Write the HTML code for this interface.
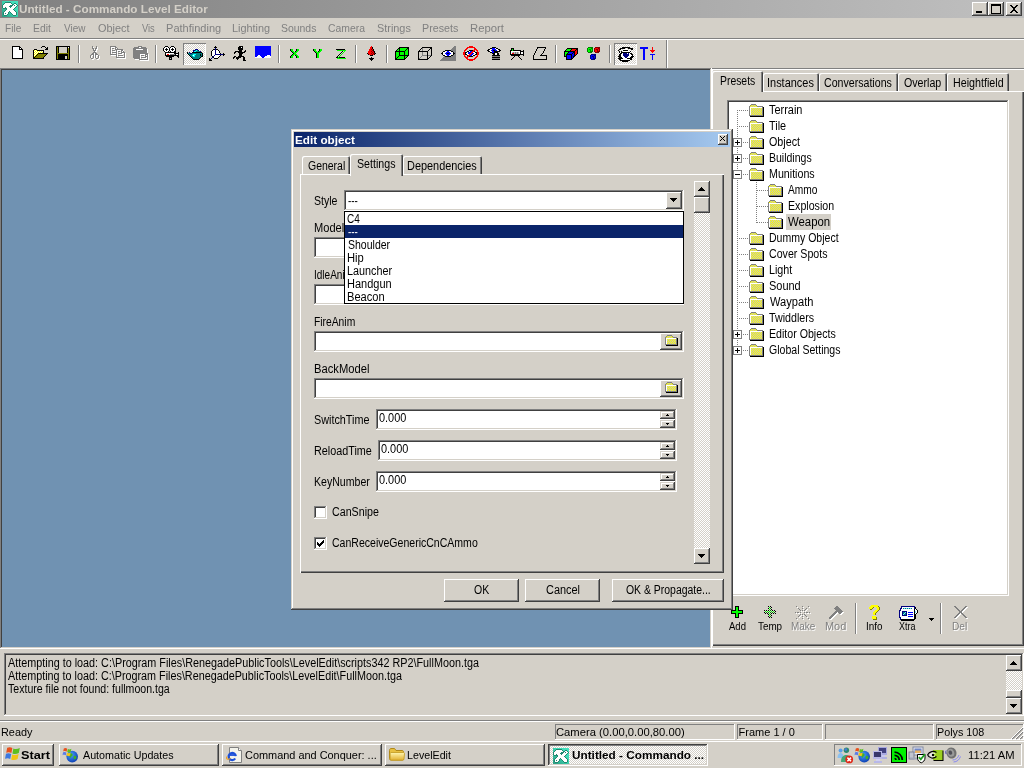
<!DOCTYPE html>
<html>
<head>
<meta charset="utf-8">
<title>Untitled - Commando Level Editor</title>
<style>
*{box-sizing:border-box;margin:0;padding:0}
html,body{width:1024px;height:768px;overflow:hidden;background:#d4d0c8;font-family:"Liberation Sans",sans-serif;font-size:12px;color:#000}
.a{position:absolute}
.t{position:absolute;white-space:nowrap;line-height:16px;height:16px;transform-origin:0 0}
.raised{box-shadow:inset -1px -1px 0 #404040,inset 1px 1px 0 #fff,inset -2px -2px 0 #808080,inset 2px 2px 0 #d4d0c8;background:#d4d0c8}
.btn{box-shadow:inset -1px -1px 0 #404040,inset 1px 1px 0 #fff,inset -2px -2px 0 #808080;background:#d4d0c8}
.sunken{box-shadow:inset -1px -1px 0 #fff,inset 1px 1px 0 #808080,inset -2px -2px 0 #d4d0c8,inset 2px 2px 0 #404040}
.pressed{box-shadow:inset -1px -1px 0 #fff,inset 1px 1px 0 #404040,inset -2px -2px 0 #d4d0c8,inset 2px 2px 0 #808080}
.frame{box-shadow:inset -1px -1px 0 #404040,inset 1px 1px 0 #d4d0c8,inset -2px -2px 0 #808080,inset 2px 2px 0 #fff;background:#d4d0c8}
.tsunk{box-shadow:inset -1px -1px 0 #fff,inset 1px 1px 0 #808080}
.traise{box-shadow:inset -1px -1px 0 #808080,inset 1px 1px 0 #fff}
.chk{background-image:conic-gradient(#fff 25%,#d4d0c8 0 50%,#fff 0 75%,#d4d0c8 0);background-size:2px 2px}
.vsep{position:absolute;width:2px;border-left:1px solid #808080;border-right:1px solid #fff}
svg{position:absolute;overflow:visible}
</style>
</head>
<body>
<div id="w" style="position:absolute;left:0;top:0;width:1024px;height:768px;will-change:transform">
<div class="a " style="left:0px;top:0px;width:1024px;height:18px;background:linear-gradient(90deg,#808080,#c0c0c0)"></div>
<span class="t" style="left:19.33px;top:1px;font-size:11px;color:#d4d0c8;font-weight:bold;transform:scaleX(1.0652);">Untitled - Commando Level Editor</span>
<div class="a btn" style="left:972px;top:2px;width:16px;height:14px;"></div>
<div class="a btn" style="left:988px;top:2px;width:16px;height:14px;"></div>
<div class="a btn" style="left:1006px;top:2px;width:16px;height:14px;"></div>
<svg style="left:972px;top:2px" width="50" height="14" shape-rendering="crispEdges"><rect x="4" y="9" width="6" height="2" fill="#000"/><rect x="19" y="2" width="9" height="9" fill="none" stroke="#000" stroke-width="1" transform="translate(.5,.5)"/><rect x="19" y="2" width="10" height="2" fill="#000"/><path d="M38 3h2v1h1v1h1v1h0v-1h1v-1h1v-1h2v1h-1v1h-1v1h-1v1h-0v1h1v1h1v1h1v1h-2v-1h-1v-1h-1v-1h0v1h-1v1h-1v1h-2v-1h1v-1h1v-1h1v-1h0v-1h-1v-1h-1v-1h-1z" fill="#000"/></svg>
<span class="t" style="left:5.20px;top:20px;font-size:11px;color:#808080;transform:scaleX(0.9160);">File</span>
<span class="t" style="left:33.17px;top:20px;font-size:11px;color:#808080;transform:scaleX(0.9444);">Edit</span>
<span class="t" style="left:64.00px;top:20px;font-size:11px;color:#808080;transform:scaleX(0.9053);">View</span>
<span class="t" style="left:97.50px;top:20px;font-size:11px;color:#808080;transform:scaleX(0.9920);">Object</span>
<span class="t" style="left:141.50px;top:20px;font-size:11px;color:#808080;transform:scaleX(0.8475);">Vis</span>
<span class="t" style="left:166.12px;top:20px;font-size:11px;color:#808080;">Pathfinding</span>
<span class="t" style="left:231.63px;top:20px;font-size:11px;color:#808080;transform:scaleX(0.9898);">Lighting</span>
<span class="t" style="left:281.03px;top:20px;font-size:11px;color:#808080;transform:scaleX(0.9485);">Sounds</span>
<span class="t" style="left:328.03px;top:20px;font-size:11px;color:#808080;transform:scaleX(0.9450);">Camera</span>
<span class="t" style="left:377.01px;top:20px;font-size:11px;color:#808080;transform:scaleX(0.9888);">Strings</span>
<span class="t" style="left:422.15px;top:20px;font-size:11px;color:#808080;transform:scaleX(0.9722);">Presets</span>
<span class="t" style="left:469.60px;top:20px;font-size:11px;color:#808080;transform:scaleX(1.0272);">Report</span>
<div class="a " style="left:0px;top:38px;width:1024px;height:1px;background:#808080"></div>
<div class="a " style="left:0px;top:39px;width:1024px;height:1px;background:#fff"></div>
<div class="a sunken" style="left:0px;top:68px;width:712px;height:581px;background:#7092b2"></div>
<div class="vsep" style="left:78px;top:45px;height:18px"></div>
<div class="vsep" style="left:155px;top:45px;height:18px"></div>
<div class="vsep" style="left:278px;top:45px;height:18px"></div>
<div class="vsep" style="left:355px;top:45px;height:18px"></div>
<div class="vsep" style="left:386px;top:45px;height:18px"></div>
<div class="vsep" style="left:555px;top:45px;height:18px"></div>
<div class="vsep" style="left:609px;top:45px;height:18px"></div>
<div class="vsep" style="left:666px;top:40px;height:28px"></div>
<div class="a chk" style="left:183px;top:43px;width:23px;height:22px;box-shadow:inset 1px 1px 0 #808080,inset -1px -1px 0 #fff"></div>
<div class="a chk" style="left:614px;top:43px;width:23px;height:22px;box-shadow:inset 1px 1px 0 #808080,inset -1px -1px 0 #fff"></div>
<svg style="left:12px;top:46px" width="12" height="14" shape-rendering="crispEdges"><path fill="#000" d="M0 0h8v1h-8zM0 1h1v1h-1zM7 1h2v1h-2zM0 2h1v1h-1zM7 2h1v1h-1zM9 2h1v1h-1zM0 3h1v1h-1zM7 3h4v1h-4zM0 4h1v1h-1zM10 4h1v1h-1zM0 5h1v1h-1zM10 5h1v1h-1zM0 6h1v1h-1zM10 6h1v1h-1zM0 7h1v1h-1zM10 7h1v1h-1zM0 8h1v1h-1zM10 8h1v1h-1zM0 9h1v1h-1zM10 9h1v1h-1zM0 10h1v1h-1zM10 10h1v1h-1zM0 11h1v1h-1zM10 11h1v1h-1zM0 12h11v1h-11z"/><path fill="#fff" d="M1 1h6v1h-6zM1 2h6v1h-6zM8 2h1v1h-1zM1 3h6v1h-6zM1 4h9v1h-9zM1 5h9v1h-9zM1 6h9v1h-9zM1 7h9v1h-9zM1 8h9v1h-9zM1 9h9v1h-9zM1 10h9v1h-9zM1 11h9v1h-9z"/></svg>
<svg style="left:33px;top:46px" width="17" height="14" shape-rendering="crispEdges"><path fill="#000" d="M9 0h3v1h-3zM8 1h1v1h-1zM12 1h1v1h-1zM14 1h1v1h-1zM13 2h2v1h-2zM1 3h3v1h-3zM12 3h3v1h-3zM0 4h1v1h-1zM4 4h7v1h-7zM0 5h1v1h-1zM10 5h1v1h-1zM0 6h1v1h-1zM10 6h1v1h-1zM0 7h1v1h-1zM5 7h10v1h-10zM0 8h1v1h-1zM4 8h1v1h-1zM13 8h1v1h-1zM0 9h1v1h-1zM3 9h1v1h-1zM12 9h1v1h-1zM0 10h1v1h-1zM2 10h1v1h-1zM11 10h1v1h-1zM0 11h2v1h-2zM10 11h1v1h-1zM0 12h11v1h-11z"/><path fill="#ffff00" d="M1 4h1v1h-1zM3 4h1v1h-1zM2 5h1v1h-1zM4 5h1v1h-1zM6 5h1v1h-1zM8 5h1v1h-1zM1 6h1v1h-1zM3 6h1v1h-1zM5 6h1v1h-1zM7 6h1v1h-1zM9 6h1v1h-1zM2 7h1v1h-1zM4 7h1v1h-1zM1 8h1v1h-1zM3 8h1v1h-1zM2 9h1v1h-1zM1 10h1v1h-1z"/><path fill="#fff" d="M2 4h1v1h-1zM1 5h1v1h-1zM3 5h1v1h-1zM5 5h1v1h-1zM7 5h1v1h-1zM9 5h1v1h-1zM2 6h1v1h-1zM4 6h1v1h-1zM6 6h1v1h-1zM8 6h1v1h-1zM1 7h1v1h-1zM3 7h1v1h-1zM2 8h1v1h-1zM1 9h1v1h-1z"/><path fill="#808000" d="M5 8h8v1h-8zM4 9h8v1h-8zM3 10h8v1h-8zM2 11h8v1h-8z"/></svg>
<svg style="left:56px;top:46px" width="15" height="15" shape-rendering="crispEdges"><path fill="#000" d="M0 0h14v1h-14zM0 1h1v1h-1zM2 1h1v1h-1zM11 1h1v1h-1zM13 1h1v1h-1zM0 2h1v1h-1zM2 2h1v1h-1zM11 2h1v1h-1zM13 2h1v1h-1zM0 3h1v1h-1zM2 3h1v1h-1zM11 3h1v1h-1zM13 3h1v1h-1zM0 4h1v1h-1zM2 4h1v1h-1zM11 4h1v1h-1zM13 4h1v1h-1zM0 5h1v1h-1zM2 5h1v1h-1zM11 5h1v1h-1zM13 5h1v1h-1zM0 6h1v1h-1zM2 6h1v1h-1zM11 6h1v1h-1zM13 6h1v1h-1zM0 7h1v1h-1zM13 7h1v1h-1zM0 8h1v1h-1zM2 8h10v1h-10zM13 8h1v1h-1zM0 9h1v1h-1zM2 9h10v1h-10zM13 9h1v1h-1zM0 10h1v1h-1zM2 10h7v1h-7zM11 10h1v1h-1zM13 10h1v1h-1zM0 11h1v1h-1zM2 11h7v1h-7zM11 11h1v1h-1zM13 11h1v1h-1zM0 12h1v1h-1zM2 12h7v1h-7zM11 12h1v1h-1zM13 12h1v1h-1zM0 13h14v1h-14z"/><path fill="#808000" d="M1 1h1v1h-1zM1 2h1v1h-1zM12 2h1v1h-1zM1 3h1v1h-1zM12 3h1v1h-1zM1 4h1v1h-1zM12 4h1v1h-1zM1 5h1v1h-1zM12 5h1v1h-1zM1 6h1v1h-1zM12 6h1v1h-1zM1 7h12v1h-12zM1 8h1v1h-1zM12 8h1v1h-1zM1 9h1v1h-1zM12 9h1v1h-1zM1 10h1v1h-1zM12 10h1v1h-1zM1 11h1v1h-1zM12 11h1v1h-1zM1 12h1v1h-1zM12 12h1v1h-1z"/><path fill="#d4d0c8" d="M3 1h8v1h-8zM3 2h8v1h-8zM3 3h8v1h-8zM3 4h8v1h-8zM3 5h8v1h-8zM3 6h8v1h-8zM9 10h2v1h-2zM9 11h2v1h-2zM9 12h2v1h-2z"/><path fill="#fff" d="M12 1h1v1h-1z"/></svg>
<svg style="left:90px;top:46px" width="10" height="14" shape-rendering="crispEdges"><path fill="#fff" transform="translate(1,1)" d="M2 0h1v1h-1zM6 0h1v1h-1zM2 1h1v1h-1zM6 1h1v1h-1zM2 2h2v1h-2zM5 2h2v1h-2zM3 3h1v1h-1zM5 3h1v1h-1zM3 4h3v1h-3zM4 5h1v1h-1zM3 6h3v1h-3zM2 7h2v1h-2zM5 7h2v1h-2zM1 8h3v1h-3zM5 8h3v1h-3zM0 9h1v1h-1zM3 9h1v1h-1zM5 9h1v1h-1zM8 9h1v1h-1zM0 10h1v1h-1zM3 10h1v1h-1zM5 10h1v1h-1zM8 10h1v1h-1zM0 11h1v1h-1zM3 11h1v1h-1zM5 11h1v1h-1zM8 11h1v1h-1zM1 12h2v1h-2zM6 12h2v1h-2z"/><path fill="#808080" d="M2 0h1v1h-1zM6 0h1v1h-1zM2 1h1v1h-1zM6 1h1v1h-1zM2 2h2v1h-2zM5 2h2v1h-2zM3 3h1v1h-1zM5 3h1v1h-1zM3 4h3v1h-3zM4 5h1v1h-1zM3 6h3v1h-3zM2 7h2v1h-2zM5 7h2v1h-2zM1 8h3v1h-3zM5 8h3v1h-3zM0 9h1v1h-1zM3 9h1v1h-1zM5 9h1v1h-1zM8 9h1v1h-1zM0 10h1v1h-1zM3 10h1v1h-1zM5 10h1v1h-1zM8 10h1v1h-1zM0 11h1v1h-1zM3 11h1v1h-1zM5 11h1v1h-1zM8 11h1v1h-1zM1 12h2v1h-2zM6 12h2v1h-2z"/></svg>
<svg style="left:110px;top:46px" width="17" height="13" shape-rendering="crispEdges"><path fill="#fff" transform="translate(1,1)" d="M0 0h6v1h-6zM0 1h1v1h-1zM5 1h2v1h-2zM0 2h1v1h-1zM2 2h2v1h-2zM5 2h1v1h-1zM7 2h1v1h-1zM0 3h1v1h-1zM5 3h8v1h-8zM0 4h1v1h-1zM2 4h3v1h-3zM6 4h1v1h-1zM11 4h2v1h-2zM0 5h1v1h-1zM6 5h1v1h-1zM8 5h2v1h-2zM11 5h1v1h-1zM13 5h1v1h-1zM0 6h1v1h-1zM2 6h5v1h-5zM11 6h4v1h-4zM0 7h1v1h-1zM6 7h1v1h-1zM8 7h4v1h-4zM14 7h1v1h-1zM0 8h7v1h-7zM14 8h1v1h-1zM6 9h1v1h-1zM8 9h5v1h-5zM14 9h1v1h-1zM6 10h1v1h-1zM14 10h1v1h-1zM6 11h9v1h-9z"/><path fill="#808080" d="M0 0h6v1h-6zM0 1h1v1h-1zM5 1h2v1h-2zM0 2h1v1h-1zM2 2h2v1h-2zM5 2h1v1h-1zM7 2h1v1h-1zM0 3h1v1h-1zM5 3h8v1h-8zM0 4h1v1h-1zM2 4h3v1h-3zM6 4h1v1h-1zM11 4h2v1h-2zM0 5h1v1h-1zM6 5h1v1h-1zM8 5h2v1h-2zM11 5h1v1h-1zM13 5h1v1h-1zM0 6h1v1h-1zM2 6h5v1h-5zM11 6h4v1h-4zM0 7h1v1h-1zM6 7h1v1h-1zM8 7h4v1h-4zM14 7h1v1h-1zM0 8h7v1h-7zM14 8h1v1h-1zM6 9h1v1h-1zM8 9h5v1h-5zM14 9h1v1h-1zM6 10h1v1h-1zM14 10h1v1h-1zM6 11h9v1h-9z"/></svg>
<svg style="left:133px;top:46px" width="17" height="15" shape-rendering="crispEdges"><path fill="#fff" transform="translate(1,1)" d="M5 0h4v1h-4zM1 1h5v1h-5zM8 1h5v1h-5zM0 2h14v1h-14zM0 3h3v1h-3zM10 3h4v1h-4zM0 4h14v1h-14zM0 5h14v1h-14zM0 6h14v1h-14zM0 7h15v1h-15zM0 8h7v1h-7zM12 8h3v1h-3zM0 9h7v1h-7zM8 9h3v1h-3zM12 9h1v1h-1zM14 9h1v1h-1zM0 10h7v1h-7zM12 10h3v1h-3zM0 11h7v1h-7zM8 11h5v1h-5zM14 11h1v1h-1zM1 12h6v1h-6zM14 12h1v1h-1zM6 13h9v1h-9z"/><path fill="#808080" d="M5 0h4v1h-4zM1 1h5v1h-5zM8 1h5v1h-5zM0 2h14v1h-14zM0 3h3v1h-3zM10 3h4v1h-4zM0 4h14v1h-14zM0 5h14v1h-14zM0 6h14v1h-14zM0 7h15v1h-15zM0 8h7v1h-7zM12 8h3v1h-3zM0 9h7v1h-7zM8 9h3v1h-3zM12 9h1v1h-1zM14 9h1v1h-1zM0 10h7v1h-7zM12 10h3v1h-3zM0 11h7v1h-7zM8 11h5v1h-5zM14 11h1v1h-1zM1 12h6v1h-6zM14 12h1v1h-1zM6 13h9v1h-9z"/></svg>
<svg style="left:163px;top:46px" width="18" height="15" shape-rendering="crispEdges"><path fill="#000" d="M2 0h3v1h-3zM8 0h3v1h-3zM1 1h1v1h-1zM5 1h1v1h-1zM7 1h1v1h-1zM11 1h1v1h-1zM0 2h1v1h-1zM3 2h1v1h-1zM6 2h1v1h-1zM9 2h1v1h-1zM12 2h1v1h-1zM0 3h1v1h-1zM2 3h3v1h-3zM6 3h1v1h-1zM8 3h3v1h-3zM12 3h1v1h-1zM0 4h1v1h-1zM3 4h1v1h-1zM6 4h1v1h-1zM9 4h1v1h-1zM12 4h1v1h-1zM1 5h1v1h-1zM5 5h1v1h-1zM7 5h1v1h-1zM11 5h2v1h-2zM2 6h11v1h-11zM15 6h1v1h-1zM2 7h1v1h-1zM11 7h5v1h-5zM2 8h1v1h-1zM12 8h1v1h-1zM15 8h1v1h-1zM2 9h14v1h-14zM3 10h8v1h-8zM14 10h2v1h-2zM6 11h3v1h-3zM15 11h1v1h-1zM6 12h1v1h-1zM8 12h1v1h-1zM6 13h3v1h-3z"/><path fill="#fff" d="M2 1h3v1h-3zM8 1h3v1h-3zM1 2h2v1h-2zM4 2h2v1h-2zM7 2h2v1h-2zM10 2h2v1h-2zM1 3h1v1h-1zM5 3h1v1h-1zM7 3h1v1h-1zM11 3h1v1h-1zM1 4h2v1h-2zM4 4h2v1h-2zM7 4h2v1h-2zM10 4h2v1h-2zM2 5h3v1h-3zM8 5h3v1h-3zM3 7h8v1h-8zM3 8h1v1h-1zM6 8h1v1h-1zM13 8h2v1h-2z"/><path fill="#ff0000" d="M4 8h2v1h-2z"/><path fill="#808080" d="M7 8h5v1h-5z"/><path fill="#c0c0c0" d="M7 12h1v1h-1z"/></svg>
<svg style="left:187px;top:49px" width="17" height="12" shape-rendering="crispEdges"><path fill="#000080" d="M8 0h3v1h-3zM6 1h2v1h-2zM11 1h1v1h-1zM6 2h1v1h-1zM13 2h1v1h-1zM2 3h1v1h-1zM3 4h2v1h-2z"/><path fill="#008080" d="M8 1h1v1h-1zM10 1h1v1h-1zM9 2h4v1h-4zM1 4h2v1h-2zM5 4h10v1h-10zM2 5h4v1h-4zM9 5h4v1h-4zM14 5h1v1h-1zM3 6h2v1h-2zM8 6h5v1h-5zM14 6h1v1h-1zM4 7h2v1h-2zM8 7h6v1h-6zM5 8h8v1h-8zM6 9h6v1h-6z"/><path fill="#00ffff" d="M9 1h1v1h-1zM7 2h2v1h-2zM6 5h3v1h-3zM5 6h1v1h-1zM7 6h1v1h-1zM6 7h2v1h-2z"/><path fill="#000" d="M0 3h1v1h-1zM5 3h10v1h-10zM0 4h1v1h-1zM15 4h1v1h-1zM1 5h1v1h-1zM13 5h1v1h-1zM15 5h1v1h-1zM2 6h1v1h-1zM13 6h1v1h-1zM15 6h1v1h-1zM3 7h1v1h-1zM14 7h2v1h-2zM4 8h1v1h-1zM13 8h1v1h-1zM5 9h1v1h-1zM12 9h1v1h-1zM6 10h6v1h-6z"/><path fill="#fff" d="M6 6h1v1h-1z"/></svg>
<svg style="left:209px;top:46px" width="17" height="16" shape-rendering="crispEdges"><path fill="#000" d="M6 0h1v1h-1zM5 1h3v1h-3zM4 3h2v1h-2zM7 3h2v1h-2zM3 4h1v1h-1zM9 4h1v1h-1zM2 5h1v1h-1zM10 5h1v1h-1zM2 6h1v1h-1zM10 6h1v1h-1zM2 7h1v1h-1zM11 7h1v1h-1zM14 7h1v1h-1zM2 8h1v1h-1zM14 8h2v1h-2zM2 9h1v1h-1zM11 9h1v1h-1zM14 9h1v1h-1zM3 10h1v1h-1zM10 10h1v1h-1zM4 11h1v1h-1zM9 11h1v1h-1zM0 12h1v1h-1zM5 12h4v1h-4zM0 13h2v1h-2zM0 14h3v1h-3z"/><path fill="#000080" d="M6 2h1v1h-1zM6 3h1v1h-1zM6 4h1v1h-1zM6 5h1v1h-1zM6 6h1v1h-1zM6 7h1v1h-1zM6 8h8v1h-8zM5 9h1v1h-1zM4 10h1v1h-1zM3 11h1v1h-1zM2 12h1v1h-1z"/><path fill="#fff" d="M4 4h2v1h-2zM7 4h2v1h-2zM3 5h3v1h-3zM7 5h3v1h-3zM3 6h3v1h-3zM7 6h3v1h-3zM3 7h3v1h-3zM7 7h4v1h-4zM3 8h3v1h-3zM3 9h2v1h-2zM6 9h5v1h-5zM5 10h5v1h-5zM5 11h4v1h-4z"/></svg>
<svg style="left:233px;top:46px" width="14" height="16" shape-rendering="crispEdges"><path fill="#000" d="M6 0h4v1h-4zM5 1h3v1h-3zM9 1h1v1h-1zM5 2h5v1h-5zM5 3h5v1h-5zM6 4h3v1h-3zM12 4h1v1h-1zM2 5h7v1h-7zM11 5h2v1h-2zM1 6h2v1h-2zM5 6h7v1h-7zM1 7h1v1h-1zM6 7h4v1h-4zM6 8h3v1h-3zM6 9h3v1h-3zM1 10h2v1h-2zM5 10h6v1h-6zM0 11h2v1h-2zM3 11h5v1h-5zM10 11h2v1h-2zM0 12h1v1h-1zM3 12h3v1h-3zM10 12h2v1h-2zM4 13h1v1h-1zM10 13h2v1h-2zM10 14h3v1h-3z"/><path fill="#fff" d="M8 1h1v1h-1z"/></svg>
<svg style="left:255px;top:46px" width="17" height="13" shape-rendering="crispEdges"><path fill="#0000ff" d="M0 0h16v1h-16zM0 1h16v1h-16zM0 2h16v1h-16zM0 3h16v1h-16zM0 4h16v1h-16zM0 5h16v1h-16zM0 6h16v1h-16zM0 7h16v1h-16zM0 8h16v1h-16zM0 9h3v1h-3zM5 9h7v1h-7zM15 9h1v1h-1zM0 10h2v1h-2zM6 10h4v1h-4zM7 11h2v1h-2z"/><path fill="#fff" d="M3 9h2v1h-2zM12 9h3v1h-3zM2 10h4v1h-4zM10 10h6v1h-6zM0 11h7v1h-7zM9 11h7v1h-7z"/></svg>
<svg style="left:290px;top:49px" width="10" height="10" shape-rendering="crispEdges"><path fill="#000" d="M0 0h1v1h-1zM6 0h1v1h-1zM0 1h1v1h-1zM6 1h1v1h-1zM1 2h1v1h-1zM5 2h1v1h-1zM2 3h1v1h-1zM3 4h1v1h-1zM2 5h1v1h-1zM1 6h1v1h-1zM5 6h1v1h-1zM0 7h1v1h-1zM6 7h1v1h-1zM0 8h1v1h-1zM6 8h1v1h-1z"/><path fill="#00ff00" d="M1 0h2v1h-2zM7 0h2v1h-2zM1 1h2v1h-2zM7 1h2v1h-2zM2 2h2v1h-2zM6 2h2v1h-2zM3 3h4v1h-4zM4 4h2v1h-2zM3 5h4v1h-4zM2 6h2v1h-2zM6 6h2v1h-2zM1 7h2v1h-2zM7 7h2v1h-2zM1 8h2v1h-2zM7 8h2v1h-2z"/></svg>
<svg style="left:313px;top:49px" width="10" height="10" shape-rendering="crispEdges"><path fill="#000" d="M0 0h1v1h-1zM6 0h1v1h-1zM0 1h1v1h-1zM6 1h1v1h-1zM1 2h1v1h-1zM5 2h1v1h-1zM2 3h1v1h-1zM3 4h1v1h-1zM3 5h1v1h-1zM3 6h1v1h-1zM3 7h1v1h-1zM3 8h1v1h-1z"/><path fill="#00ff00" d="M1 0h2v1h-2zM7 0h2v1h-2zM1 1h2v1h-2zM7 1h2v1h-2zM2 2h2v1h-2zM6 2h2v1h-2zM3 3h4v1h-4zM4 4h2v1h-2zM4 5h2v1h-2zM4 6h2v1h-2zM4 7h2v1h-2zM4 8h2v1h-2z"/></svg>
<svg style="left:336px;top:49px" width="11" height="11" shape-rendering="crispEdges"><path fill="#000" d="M0 0h9v1h-9zM6 2h1v1h-1zM5 3h1v1h-1zM4 4h1v1h-1zM3 5h1v1h-1zM2 6h1v1h-1zM1 7h1v1h-1zM0 8h2v1h-2zM3 8h6v1h-6z"/><path fill="#00ff00" d="M1 1h9v1h-9zM8 2h1v1h-1zM7 3h1v1h-1zM6 4h1v1h-1zM5 5h1v1h-1zM4 6h1v1h-1zM3 7h1v1h-1zM2 8h1v1h-1zM1 9h9v1h-9z"/></svg>
<svg style="left:367px;top:46px" width="10" height="16" shape-rendering="crispEdges"><path fill="#ff0000" d="M4 0h1v1h-1zM3 1h2v1h-2zM3 2h2v1h-2zM2 3h2v1h-2zM5 3h1v1h-1zM2 4h3v1h-3zM1 5h3v1h-3zM5 5h1v1h-1zM1 6h4v1h-4zM6 6h1v1h-1zM1 7h3v1h-3zM5 7h1v1h-1zM2 8h3v1h-3zM6 8h1v1h-1z"/><path fill="#000" d="M5 1h1v1h-1zM5 2h1v1h-1zM6 3h1v1h-1zM6 4h1v1h-1zM7 5h1v1h-1zM7 6h1v1h-1zM0 7h1v1h-1zM8 7h1v1h-1zM1 8h1v1h-1zM7 8h1v1h-1zM3 9h3v1h-3zM4 11h1v1h-1zM2 12h5v1h-5zM3 13h3v1h-3zM4 14h1v1h-1z"/><path fill="#800000" d="M4 3h1v1h-1zM5 4h1v1h-1zM4 5h1v1h-1zM6 5h1v1h-1zM5 6h1v1h-1zM4 7h1v1h-1zM6 7h2v1h-2zM5 8h1v1h-1z"/></svg>
<svg style="left:395px;top:47px" width="15" height="14" shape-rendering="crispEdges"><path fill="#000" d="M4 0h10v1h-10zM3 1h2v1h-2zM12 1h2v1h-2zM2 2h1v1h-1zM4 2h1v1h-1zM11 2h1v1h-1zM13 2h1v1h-1zM1 3h1v1h-1zM4 3h1v1h-1zM10 3h1v1h-1zM13 3h1v1h-1zM0 4h10v1h-10zM13 4h1v1h-1zM0 5h1v1h-1zM4 5h1v1h-1zM9 5h1v1h-1zM13 5h1v1h-1zM0 6h1v1h-1zM4 6h1v1h-1zM9 6h1v1h-1zM13 6h1v1h-1zM0 7h1v1h-1zM4 7h1v1h-1zM9 7h1v1h-1zM13 7h1v1h-1zM0 8h1v1h-1zM4 8h10v1h-10zM0 9h1v1h-1zM3 9h1v1h-1zM9 9h1v1h-1zM12 9h1v1h-1zM0 10h1v1h-1zM2 10h1v1h-1zM9 10h1v1h-1zM11 10h1v1h-1zM0 11h2v1h-2zM9 11h2v1h-2zM0 12h10v1h-10z"/><path fill="#00ff00" d="M5 1h7v1h-7zM3 2h1v1h-1zM5 2h6v1h-6zM12 2h1v1h-1zM2 3h2v1h-2zM5 3h5v1h-5zM11 3h2v1h-2zM10 4h3v1h-3zM1 5h3v1h-3zM5 5h4v1h-4zM10 5h3v1h-3zM1 6h3v1h-3zM5 6h4v1h-4zM10 6h3v1h-3zM1 7h3v1h-3zM5 7h4v1h-4zM10 7h3v1h-3zM1 8h3v1h-3zM1 9h2v1h-2zM4 9h5v1h-5zM10 9h2v1h-2zM1 10h1v1h-1zM3 10h6v1h-6zM10 10h1v1h-1zM2 11h7v1h-7z"/></svg>
<svg style="left:418px;top:47px" width="15" height="14" shape-rendering="crispEdges"><path fill="#000" d="M4 0h10v1h-10zM3 1h1v1h-1zM12 1h2v1h-2zM2 2h1v1h-1zM11 2h1v1h-1zM13 2h1v1h-1zM1 3h1v1h-1zM10 3h1v1h-1zM13 3h1v1h-1zM0 4h10v1h-10zM13 4h1v1h-1zM0 5h1v1h-1zM9 5h1v1h-1zM13 5h1v1h-1zM0 6h1v1h-1zM9 6h1v1h-1zM13 6h1v1h-1zM0 7h1v1h-1zM9 7h1v1h-1zM13 7h1v1h-1zM0 8h1v1h-1zM9 8h1v1h-1zM13 8h1v1h-1zM0 9h1v1h-1zM9 9h1v1h-1zM12 9h1v1h-1zM0 10h1v1h-1zM9 10h1v1h-1zM11 10h1v1h-1zM0 11h1v1h-1zM9 11h2v1h-2zM0 12h10v1h-10z"/><path fill="#808080" d="M4 1h1v1h-1zM4 2h1v1h-1zM4 3h1v1h-1zM4 5h1v1h-1zM4 6h1v1h-1zM4 7h1v1h-1zM4 8h5v1h-5zM10 8h3v1h-3zM3 9h1v1h-1zM2 10h1v1h-1zM1 11h1v1h-1z"/></svg>
<svg style="left:440px;top:46px" width="17" height="16" shape-rendering="crispEdges"><path fill="#808080" d="M14 0h2v1h-2zM13 1h3v1h-3zM12 2h4v1h-4zM11 3h5v1h-5zM11 4h5v1h-5zM13 5h3v1h-3zM14 6h2v1h-2zM15 7h1v1h-1zM14 8h2v1h-2zM13 9h3v1h-3zM4 10h1v1h-1zM11 10h5v1h-5zM3 11h13v1h-13zM2 12h14v1h-14zM1 13h15v1h-15zM0 14h16v1h-16z"/><path fill="#000" d="M5 4h6v1h-6zM3 5h2v1h-2zM11 5h2v1h-2zM2 6h1v1h-1zM13 6h1v1h-1zM1 7h2v1h-2zM7 7h2v1h-2zM13 7h2v1h-2zM2 8h1v1h-1zM13 8h1v1h-1zM3 9h2v1h-2zM11 9h2v1h-2zM5 10h6v1h-6z"/><path fill="#fff" d="M5 5h2v1h-2zM9 5h2v1h-2zM3 6h3v1h-3zM10 6h3v1h-3zM3 7h2v1h-2zM11 7h2v1h-2zM3 8h3v1h-3zM10 8h3v1h-3zM5 9h2v1h-2zM9 9h2v1h-2z"/><path fill="#0000ff" d="M7 5h2v1h-2zM6 6h4v1h-4zM5 7h2v1h-2zM9 7h2v1h-2zM6 8h4v1h-4zM7 9h2v1h-2z"/></svg>
<svg style="left:463px;top:46px" width="17" height="16" shape-rendering="crispEdges"><path fill="#ff0000" d="M6 0h4v1h-4zM4 1h8v1h-8zM3 2h2v1h-2zM11 2h2v1h-2zM2 3h2v1h-2zM11 3h3v1h-3zM1 4h2v1h-2zM10 4h2v1h-2zM13 4h2v1h-2zM1 5h1v1h-1zM9 5h2v1h-2zM14 5h1v1h-1zM0 6h2v1h-2zM8 6h2v1h-2zM14 6h2v1h-2zM0 7h2v1h-2zM7 7h2v1h-2zM14 7h2v1h-2zM0 8h2v1h-2zM6 8h2v1h-2zM14 8h2v1h-2zM1 9h1v1h-1zM5 9h2v1h-2zM14 9h1v1h-1zM1 10h2v1h-2zM4 10h2v1h-2zM13 10h2v1h-2zM2 11h3v1h-3zM12 11h2v1h-2zM3 12h2v1h-2zM11 12h2v1h-2zM4 13h8v1h-8zM6 14h4v1h-4z"/><path fill="#000" d="M6 4h4v1h-4zM4 5h2v1h-2zM11 5h1v1h-1zM2 6h2v1h-2zM12 6h2v1h-2zM2 7h1v1h-1zM13 7h1v1h-1zM2 8h2v1h-2zM12 8h2v1h-2zM4 9h1v1h-1zM10 9h2v1h-2zM6 10h4v1h-4z"/><path fill="#fff" d="M6 5h1v1h-1zM4 6h1v1h-1zM10 6h2v1h-2zM3 7h2v1h-2zM11 7h2v1h-2zM4 8h2v1h-2zM10 8h2v1h-2zM9 9h1v1h-1z"/><path fill="#0000ff" d="M7 5h2v1h-2zM5 6h3v1h-3zM5 7h2v1h-2zM9 7h2v1h-2zM8 8h2v1h-2zM7 9h2v1h-2z"/></svg>
<svg style="left:487px;top:47px" width="15" height="14" shape-rendering="crispEdges"><path fill="#000" d="M5 0h4v1h-4zM3 1h2v1h-2zM9 1h2v1h-2zM1 2h2v1h-2zM11 2h2v1h-2zM0 3h2v1h-2zM6 3h2v1h-2zM12 3h2v1h-2zM1 4h2v1h-2zM7 4h6v1h-6zM3 5h2v1h-2zM7 5h4v1h-4zM5 6h3v1h-3zM10 6h2v1h-2zM6 7h2v1h-2zM10 7h2v1h-2zM5 8h8v1h-8zM5 10h8v1h-8zM5 12h8v1h-8z"/><path fill="#0000ff" d="M5 1h3v1h-3zM5 2h4v1h-4zM4 3h2v1h-2zM8 3h2v1h-2zM5 4h2v1h-2zM5 5h2v1h-2z"/><path fill="#fff" d="M8 1h1v1h-1zM3 2h2v1h-2zM9 2h2v1h-2zM2 3h2v1h-2zM10 3h2v1h-2zM3 4h2v1h-2zM8 6h2v1h-2zM8 7h2v1h-2z"/><path fill="#808080" d="M5 9h8v1h-8zM5 11h8v1h-8z"/></svg>
<svg style="left:510px;top:48px" width="15" height="13" shape-rendering="crispEdges"><path fill="#000" d="M1 0h3v1h-3zM1 1h1v1h-1zM3 1h1v1h-1zM0 2h2v1h-2zM3 2h8v1h-8zM13 2h1v1h-1zM0 3h1v1h-1zM10 3h4v1h-4zM0 4h1v1h-1zM10 4h1v1h-1zM13 4h1v1h-1zM0 5h1v1h-1zM10 5h1v1h-1zM13 5h1v1h-1zM0 6h14v1h-14zM1 7h9v1h-9zM13 7h1v1h-1zM4 8h1v1h-1zM8 8h1v1h-1zM3 9h1v1h-1zM9 9h1v1h-1zM2 10h1v1h-1zM10 10h1v1h-1zM1 11h1v1h-1zM11 11h1v1h-1z"/><path fill="#00ff00" d="M2 1h1v1h-1zM2 2h1v1h-1z"/><path fill="#fff" d="M1 3h9v1h-9zM1 4h1v1h-1zM9 4h1v1h-1zM11 4h2v1h-2zM1 5h1v1h-1zM9 5h1v1h-1zM11 5h2v1h-2z"/><path fill="#c0c0c0" d="M2 4h1v1h-1zM4 4h1v1h-1zM6 4h1v1h-1zM8 4h1v1h-1zM4 5h1v1h-1zM6 5h1v1h-1zM8 5h1v1h-1z"/><path fill="#808080" d="M3 4h1v1h-1zM5 4h1v1h-1zM7 4h1v1h-1zM5 5h1v1h-1zM7 5h1v1h-1z"/><path fill="#ff0000" d="M2 5h2v1h-2z"/></svg>
<svg style="left:533px;top:47px" width="15" height="14" shape-rendering="crispEdges"><path fill="#000" d="M4 0h9v1h-9zM4 1h1v1h-1zM12 1h1v1h-1zM3 2h1v1h-1zM11 2h1v1h-1zM3 3h1v1h-1zM11 3h1v1h-1zM2 4h1v1h-1zM10 4h1v1h-1zM2 5h1v1h-1zM10 5h1v1h-1zM1 6h1v1h-1zM9 6h1v1h-1zM1 7h1v1h-1zM8 7h1v1h-1zM0 8h1v1h-1zM7 8h7v1h-7zM0 9h1v1h-1zM13 9h1v1h-1zM0 10h1v1h-1zM13 10h1v1h-1zM0 11h1v1h-1zM13 11h1v1h-1zM0 12h14v1h-14z"/></svg>
<svg style="left:564px;top:48px" width="15" height="13" shape-rendering="crispEdges"><path fill="#000" d="M3 0h11v1h-11zM2 1h1v1h-1zM7 1h1v1h-1zM12 1h2v1h-2zM1 2h1v1h-1zM6 2h1v1h-1zM11 2h1v1h-1zM13 2h1v1h-1zM0 3h11v1h-11zM13 3h1v1h-1zM0 4h1v1h-1zM4 4h1v1h-1zM9 4h2v1h-2zM13 4h1v1h-1zM0 5h1v1h-1zM3 5h1v1h-1zM8 5h1v1h-1zM10 5h1v1h-1zM13 5h1v1h-1zM0 6h1v1h-1zM2 6h6v1h-6zM10 6h1v1h-1zM12 6h1v1h-1zM0 7h1v1h-1zM2 7h1v1h-1zM7 7h1v1h-1zM10 7h2v1h-2zM0 8h3v1h-3zM7 8h1v1h-1zM9 8h2v1h-2zM2 9h1v1h-1zM7 9h1v1h-1zM9 9h1v1h-1zM2 10h1v1h-1zM7 10h2v1h-2zM2 11h6v1h-6z"/><path fill="#00ff00" d="M3 1h4v1h-4zM2 2h4v1h-4zM1 4h3v1h-3zM1 5h2v1h-2zM1 6h1v1h-1zM1 7h1v1h-1z"/><path fill="#ff0000" d="M8 1h4v1h-4zM7 2h4v1h-4zM12 2h1v1h-1zM11 3h2v1h-2zM11 4h2v1h-2zM11 5h2v1h-2zM11 6h1v1h-1z"/><path fill="#0000ff" d="M5 4h4v1h-4zM4 5h4v1h-4zM9 5h1v1h-1zM8 6h2v1h-2zM3 7h4v1h-4zM8 7h2v1h-2zM3 8h4v1h-4zM8 8h1v1h-1zM3 9h4v1h-4zM8 9h1v1h-1zM3 10h4v1h-4z"/></svg>
<svg style="left:587px;top:47px" width="14" height="14" shape-rendering="crispEdges"><path fill="#008000" d="M1 0h5v1h-5zM0 1h1v1h-1zM4 1h2v1h-2zM0 2h1v1h-1zM2 2h2v1h-2zM5 2h1v1h-1zM0 3h1v1h-1zM3 3h1v1h-1zM5 3h1v1h-1zM0 4h1v1h-1zM3 4h3v1h-3zM1 5h4v1h-4z"/><path fill="#800000" d="M8 0h5v1h-5zM7 1h1v1h-1zM11 1h2v1h-2zM7 2h1v1h-1zM9 2h2v1h-2zM12 2h1v1h-1zM7 3h1v1h-1zM10 3h1v1h-1zM12 3h1v1h-1zM7 4h1v1h-1zM10 4h3v1h-3zM8 5h4v1h-4z"/><path fill="#00ff00" d="M1 1h3v1h-3zM1 2h1v1h-1zM4 2h1v1h-1zM1 3h2v1h-2zM4 3h1v1h-1zM1 4h2v1h-2z"/><path fill="#ff0000" d="M8 1h3v1h-3zM8 2h1v1h-1zM11 2h1v1h-1zM8 3h2v1h-2zM11 3h1v1h-1zM8 4h2v1h-2z"/><path fill="#000080" d="M4 7h5v1h-5zM3 8h1v1h-1zM7 8h2v1h-2zM3 9h1v1h-1zM5 9h2v1h-2zM8 9h1v1h-1zM3 10h1v1h-1zM6 10h1v1h-1zM8 10h1v1h-1zM3 11h1v1h-1zM6 11h3v1h-3zM4 12h4v1h-4z"/><path fill="#0000ff" d="M4 8h3v1h-3zM4 9h1v1h-1zM7 9h1v1h-1zM4 10h2v1h-2zM7 10h1v1h-1zM4 11h2v1h-2z"/></svg>
<svg style="left:618px;top:47px" width="17" height="16" shape-rendering="crispEdges"><path fill="#000" d="M4 0h8v1h-8zM2 1h5v1h-5zM10 1h5v1h-5zM1 2h2v1h-2zM13 2h2v1h-2zM0 3h1v1h-1zM5 3h5v1h-5zM1 4h1v1h-1zM3 4h1v1h-1zM12 4h1v1h-1zM1 5h1v1h-1zM3 5h9v1h-9zM2 6h2v1h-2zM12 6h2v1h-2zM1 7h2v1h-2zM13 7h2v1h-2zM1 8h2v1h-2zM14 8h1v1h-1zM0 9h3v1h-3zM13 9h3v1h-3zM1 10h3v1h-3zM12 10h3v1h-3zM0 11h5v1h-5zM9 11h5v1h-5zM1 12h2v1h-2zM12 12h2v1h-2zM2 13h10v1h-10zM4 14h6v1h-6z"/><path fill="#fff" d="M6 2h4v1h-4zM5 4h6v1h-6zM4 6h1v1h-1zM9 6h1v1h-1zM11 6h1v1h-1zM3 7h2v1h-2zM11 7h1v1h-1zM3 8h2v1h-2zM11 8h2v1h-2zM3 9h3v1h-3zM10 9h3v1h-3zM4 10h3v1h-3zM9 10h3v1h-3zM5 11h4v1h-4zM4 12h7v1h-7z"/><path fill="#000080" d="M5 6h4v1h-4zM10 6h1v1h-1zM5 7h6v1h-6zM5 8h6v1h-6zM6 9h4v1h-4zM7 10h2v1h-2z"/></svg>
<svg style="left:640px;top:47px" width="16" height="14" shape-rendering="crispEdges"><path fill="#0000ff" d="M0 0h8v1h-8zM0 1h8v1h-8zM3 2h2v1h-2zM3 3h2v1h-2zM3 4h2v1h-2zM3 5h2v1h-2zM3 6h2v1h-2zM3 7h2v1h-2zM10 7h5v1h-5zM3 8h2v1h-2zM12 8h1v1h-1zM3 9h2v1h-2zM12 9h1v1h-1zM3 10h2v1h-2zM12 10h1v1h-1zM3 11h2v1h-2zM12 11h1v1h-1zM3 12h2v1h-2zM12 12h1v1h-1z"/><path fill="#ff0000" d="M12 0h1v1h-1zM12 1h1v1h-1zM12 2h1v1h-1zM10 3h5v1h-5zM11 4h3v1h-3zM12 5h1v1h-1z"/></svg>
<div class="a " style="left:712px;top:68px;width:312px;height:1px;background:#808080"></div>
<div class="a " style="left:712px;top:69px;width:312px;height:1px;background:#fff"></div>
<div class="a " style="left:712px;top:69px;width:1px;height:577px;background:#fff"></div>
<div class="a " style="left:0px;top:648px;width:1024px;height:1px;background:#fff"></div>
<div class="a " style="left:712px;top:91px;width:312px;height:555px;box-shadow:inset 1px 1px 0 #fff,inset -1px -1px 0 #404040,inset -2px -2px 0 #808080"></div>
<div class="a " style="left:763px;top:73px;width:56px;height:18px;border-radius:2px 2px 0 0;background:#d4d0c8;box-shadow:inset 1px 1px 0 #fff,inset -1px 0 0 #404040,inset -2px 0 0 #808080;"></div>
<div class="a " style="left:819px;top:73px;width:79px;height:18px;border-radius:2px 2px 0 0;background:#d4d0c8;box-shadow:inset 1px 1px 0 #fff,inset -1px 0 0 #404040,inset -2px 0 0 #808080;"></div>
<div class="a " style="left:898px;top:73px;width:49px;height:18px;border-radius:2px 2px 0 0;background:#d4d0c8;box-shadow:inset 1px 1px 0 #fff,inset -1px 0 0 #404040,inset -2px 0 0 #808080;"></div>
<div class="a " style="left:947px;top:73px;width:62px;height:18px;border-radius:2px 2px 0 0;background:#d4d0c8;box-shadow:inset 1px 1px 0 #fff,inset -1px 0 0 #404040,inset -2px 0 0 #808080;"></div>
<div class="a " style="left:712px;top:71px;width:51px;height:21px;border-radius:2px 2px 0 0;background:#d4d0c8;box-shadow:inset 1px 1px 0 #fff,inset -1px 0 0 #404040,inset -2px 0 0 #808080;"></div>
<div class="a " style="left:713px;top:91px;width:48px;height:1px;background:#d4d0c8"></div>
<span class="t" style="left:720.13px;top:73px;font-size:12px;color:#000;transform:scaleX(0.8662);">Presets</span>
<span class="t" style="left:766.97px;top:75px;font-size:12px;color:#000;transform:scaleX(0.9123);">Instances</span>
<span class="t" style="left:824.45px;top:75px;font-size:12px;color:#000;transform:scaleX(0.8845);">Conversations</span>
<span class="t" style="left:904.06px;top:75px;font-size:12px;color:#000;transform:scaleX(0.8875);">Overlap</span>
<span class="t" style="left:953.11px;top:75px;font-size:12px;color:#000;transform:scaleX(0.8929);">Heightfield</span>
<div class="a sunken" style="left:727px;top:100px;width:282px;height:496px;background:#fff"></div>
<div class="a " style="left:737px;top:110px;width:1px;height:241px;background-image:linear-gradient(180deg,#808080 50%,transparent 0);background-size:1px 2px"></div>
<div class="a " style="left:756px;top:182px;width:1px;height:41px;background-image:linear-gradient(180deg,#808080 50%,transparent 0);background-size:1px 2px"></div>
<div class="a " style="left:739px;top:110px;width:10px;height:1px;background-image:linear-gradient(90deg,#808080 50%,transparent 0);background-size:2px 1px"></div>
<svg width="0" height="0" style="left:0;top:0"><defs><g id="fo" shape-rendering="crispEdges"><path fill="#808080" d="M2 0h5v1h-5zM1 1h1v1h-1zM7 1h1v1h-1zM0 2h1v1h-1zM8 2h6v1h-6zM0 3h1v1h-1zM13 3h1v1h-1zM0 4h1v1h-1zM13 4h1v1h-1zM0 5h1v1h-1zM13 5h1v1h-1zM0 6h1v1h-1zM13 6h1v1h-1zM0 7h1v1h-1zM13 7h1v1h-1zM0 8h1v1h-1zM13 8h1v1h-1zM0 9h1v1h-1zM13 9h1v1h-1zM0 10h1v1h-1zM13 10h1v1h-1zM0 11h14v1h-14z"/><path fill="#ffff00" d="M2 1h1v1h-1zM4 1h1v1h-1zM6 1h1v1h-1zM1 2h1v1h-1zM3 2h1v1h-1zM5 2h1v1h-1zM7 2h1v1h-1zM2 4h1v1h-1zM4 4h1v1h-1zM6 4h1v1h-1zM8 4h1v1h-1zM10 4h1v1h-1zM12 4h1v1h-1zM3 5h1v1h-1zM5 5h1v1h-1zM7 5h1v1h-1zM9 5h1v1h-1zM11 5h1v1h-1zM2 6h1v1h-1zM4 6h1v1h-1zM6 6h1v1h-1zM8 6h1v1h-1zM10 6h1v1h-1zM12 6h1v1h-1zM3 7h1v1h-1zM5 7h1v1h-1zM7 7h1v1h-1zM9 7h1v1h-1zM11 7h1v1h-1zM2 8h1v1h-1zM4 8h1v1h-1zM6 8h1v1h-1zM8 8h1v1h-1zM10 8h1v1h-1zM12 8h1v1h-1zM3 9h1v1h-1zM5 9h1v1h-1zM7 9h1v1h-1zM9 9h1v1h-1zM11 9h1v1h-1zM2 10h1v1h-1zM4 10h1v1h-1zM6 10h1v1h-1zM8 10h1v1h-1zM10 10h1v1h-1zM12 10h1v1h-1z"/><path fill="#c0c0c0" d="M3 1h1v1h-1zM5 1h1v1h-1zM2 2h1v1h-1zM4 2h1v1h-1zM6 2h1v1h-1zM3 4h1v1h-1zM5 4h1v1h-1zM7 4h1v1h-1zM9 4h1v1h-1zM11 4h1v1h-1zM2 5h1v1h-1zM4 5h1v1h-1zM6 5h1v1h-1zM8 5h1v1h-1zM10 5h1v1h-1zM12 5h1v1h-1zM3 6h1v1h-1zM5 6h1v1h-1zM7 6h1v1h-1zM9 6h1v1h-1zM11 6h1v1h-1zM2 7h1v1h-1zM4 7h1v1h-1zM6 7h1v1h-1zM8 7h1v1h-1zM10 7h1v1h-1zM12 7h1v1h-1zM3 8h1v1h-1zM5 8h1v1h-1zM7 8h1v1h-1zM9 8h1v1h-1zM11 8h1v1h-1zM2 9h1v1h-1zM4 9h1v1h-1zM6 9h1v1h-1zM8 9h1v1h-1zM10 9h1v1h-1zM12 9h1v1h-1zM3 10h1v1h-1zM5 10h1v1h-1zM7 10h1v1h-1zM9 10h1v1h-1zM11 10h1v1h-1z"/><path fill="#fff" d="M1 3h12v1h-12zM1 4h1v1h-1zM1 5h1v1h-1zM1 6h1v1h-1zM1 7h1v1h-1zM1 8h1v1h-1zM1 9h1v1h-1zM1 10h1v1h-1z"/><path fill="#000" d="M14 3h1v1h-1zM14 4h1v1h-1zM14 5h1v1h-1zM14 6h1v1h-1zM14 7h1v1h-1zM14 8h1v1h-1zM14 9h1v1h-1zM14 10h1v1h-1zM14 11h1v1h-1zM1 12h14v1h-14z"/></g></defs></svg><svg style="left:749px;top:104px" width="16" height="14"><use href="#fo"/></svg>
<span class="t" style="left:769.47px;top:102px;font-size:12px;color:#000;transform:scaleX(0.9123);">Terrain</span>
<div class="a " style="left:739px;top:126px;width:10px;height:1px;background-image:linear-gradient(90deg,#808080 50%,transparent 0);background-size:2px 1px"></div>
<svg style="left:749px;top:120px" width="16" height="14"><use href="#fo"/></svg>
<span class="t" style="left:769.47px;top:118px;font-size:12px;color:#000;transform:scaleX(0.9048);">Tile</span>
<div class="a " style="left:739px;top:142px;width:10px;height:1px;background-image:linear-gradient(90deg,#808080 50%,transparent 0);background-size:2px 1px"></div>
<svg style="left:749px;top:136px" width="16" height="14"><use href="#fo"/></svg>
<span class="t" style="left:769.25px;top:134px;font-size:12px;color:#000;transform:scaleX(0.8938);">Object</span>
<div class="a " style="left:733px;top:138px;width:9px;height:9px;background:#fff;border:1px solid #808080"></div>
<div class="a " style="left:735px;top:142px;width:5px;height:1px;background:#000"></div>
<div class="a " style="left:737px;top:140px;width:1px;height:5px;background:#000"></div>
<div class="a " style="left:739px;top:158px;width:10px;height:1px;background-image:linear-gradient(90deg,#808080 50%,transparent 0);background-size:2px 1px"></div>
<svg style="left:749px;top:152px" width="16" height="14"><use href="#fo"/></svg>
<span class="t" style="left:768.82px;top:150px;font-size:12px;color:#000;transform:scaleX(0.8760);">Buildings</span>
<div class="a " style="left:733px;top:154px;width:9px;height:9px;background:#fff;border:1px solid #808080"></div>
<div class="a " style="left:735px;top:158px;width:5px;height:1px;background:#000"></div>
<div class="a " style="left:737px;top:156px;width:1px;height:5px;background:#000"></div>
<div class="a " style="left:739px;top:174px;width:10px;height:1px;background-image:linear-gradient(90deg,#808080 50%,transparent 0);background-size:2px 1px"></div>
<svg style="left:749px;top:168px" width="16" height="14"><use href="#fo"/></svg>
<span class="t" style="left:768.81px;top:166px;font-size:12px;color:#000;transform:scaleX(0.8900);">Munitions</span>
<div class="a " style="left:733px;top:170px;width:9px;height:9px;background:#fff;border:1px solid #808080"></div>
<div class="a " style="left:735px;top:174px;width:5px;height:1px;background:#000"></div>
<div class="a " style="left:757px;top:190px;width:11px;height:1px;background-image:linear-gradient(90deg,#808080 50%,transparent 0);background-size:2px 1px"></div>
<svg style="left:768px;top:184px" width="16" height="14"><use href="#fo"/></svg>
<span class="t" style="left:788.00px;top:182px;font-size:12px;color:#000;transform:scaleX(0.8496);">Ammo</span>
<div class="a " style="left:757px;top:206px;width:11px;height:1px;background-image:linear-gradient(90deg,#808080 50%,transparent 0);background-size:2px 1px"></div>
<svg style="left:768px;top:200px" width="16" height="14"><use href="#fo"/></svg>
<span class="t" style="left:787.81px;top:198px;font-size:12px;color:#000;transform:scaleX(0.8856);">Explosion</span>
<div class="a " style="left:757px;top:222px;width:11px;height:1px;background-image:linear-gradient(90deg,#808080 50%,transparent 0);background-size:2px 1px"></div>
<svg style="left:768px;top:216px" width="16" height="14"><use href="#fo"/></svg>
<div class="a " style="left:786px;top:214px;width:45px;height:16px;background:#d4d0c8"></div>
<span class="t" style="left:788.00px;top:214px;font-size:12px;color:#000;transform:scaleX(0.9467);">Weapon</span>
<div class="a " style="left:739px;top:238px;width:10px;height:1px;background-image:linear-gradient(90deg,#808080 50%,transparent 0);background-size:2px 1px"></div>
<svg style="left:749px;top:232px" width="16" height="14"><use href="#fo"/></svg>
<span class="t" style="left:768.82px;top:230px;font-size:12px;color:#000;transform:scaleX(0.8767);">Dummy Object</span>
<div class="a " style="left:739px;top:254px;width:10px;height:1px;background-image:linear-gradient(90deg,#808080 50%,transparent 0);background-size:2px 1px"></div>
<svg style="left:749px;top:248px" width="16" height="14"><use href="#fo"/></svg>
<span class="t" style="left:769.15px;top:246px;font-size:12px;color:#000;transform:scaleX(0.8862);">Cover Spots</span>
<div class="a " style="left:739px;top:270px;width:10px;height:1px;background-image:linear-gradient(90deg,#808080 50%,transparent 0);background-size:2px 1px"></div>
<svg style="left:749px;top:264px" width="16" height="14"><use href="#fo"/></svg>
<span class="t" style="left:768.80px;top:262px;font-size:12px;color:#000;transform:scaleX(0.8960);">Light</span>
<div class="a " style="left:739px;top:286px;width:10px;height:1px;background-image:linear-gradient(90deg,#808080 50%,transparent 0);background-size:2px 1px"></div>
<svg style="left:749px;top:280px" width="16" height="14"><use href="#fo"/></svg>
<span class="t" style="left:769.24px;top:278px;font-size:12px;color:#000;transform:scaleX(0.9139);">Sound</span>
<div class="a " style="left:739px;top:302px;width:10px;height:1px;background-image:linear-gradient(90deg,#808080 50%,transparent 0);background-size:2px 1px"></div>
<svg style="left:749px;top:296px" width="16" height="14"><use href="#fo"/></svg>
<span class="t" style="left:769.70px;top:294px;font-size:12px;color:#000;transform:scaleX(0.9257);">Waypath</span>
<div class="a " style="left:739px;top:318px;width:10px;height:1px;background-image:linear-gradient(90deg,#808080 50%,transparent 0);background-size:2px 1px"></div>
<svg style="left:749px;top:312px" width="16" height="14"><use href="#fo"/></svg>
<span class="t" style="left:769.48px;top:310px;font-size:12px;color:#000;transform:scaleX(0.8900);">Twiddlers</span>
<div class="a " style="left:739px;top:334px;width:10px;height:1px;background-image:linear-gradient(90deg,#808080 50%,transparent 0);background-size:2px 1px"></div>
<svg style="left:749px;top:328px" width="16" height="14"><use href="#fo"/></svg>
<span class="t" style="left:768.81px;top:326px;font-size:12px;color:#000;transform:scaleX(0.8851);">Editor Objects</span>
<div class="a " style="left:733px;top:330px;width:9px;height:9px;background:#fff;border:1px solid #808080"></div>
<div class="a " style="left:735px;top:334px;width:5px;height:1px;background:#000"></div>
<div class="a " style="left:737px;top:332px;width:1px;height:5px;background:#000"></div>
<div class="a " style="left:739px;top:350px;width:10px;height:1px;background-image:linear-gradient(90deg,#808080 50%,transparent 0);background-size:2px 1px"></div>
<svg style="left:749px;top:344px" width="16" height="14"><use href="#fo"/></svg>
<span class="t" style="left:769.15px;top:342px;font-size:12px;color:#000;transform:scaleX(0.8784);">Global Settings</span>
<div class="a " style="left:733px;top:346px;width:9px;height:9px;background:#fff;border:1px solid #808080"></div>
<div class="a " style="left:735px;top:350px;width:5px;height:1px;background:#000"></div>
<div class="a " style="left:737px;top:348px;width:1px;height:5px;background:#000"></div>
<svg style="left:731px;top:606px" width="13" height="13" shape-rendering="crispEdges"><path fill="#000" d="M4 0h4v1h-4zM4 1h1v1h-1zM7 1h1v1h-1zM4 2h1v1h-1zM7 2h1v1h-1zM4 3h1v1h-1zM7 3h1v1h-1zM0 4h5v1h-5zM7 4h5v1h-5zM0 5h1v1h-1zM11 5h1v1h-1zM0 6h1v1h-1zM11 6h1v1h-1zM0 7h5v1h-5zM7 7h5v1h-5zM4 8h1v1h-1zM7 8h1v1h-1zM4 9h1v1h-1zM7 9h1v1h-1zM4 10h1v1h-1zM7 10h1v1h-1zM4 11h4v1h-4z"/><path fill="#00ff00" d="M5 1h2v1h-2zM5 2h2v1h-2zM5 3h2v1h-2zM5 4h2v1h-2zM1 5h10v1h-10zM1 6h10v1h-10zM5 7h2v1h-2zM5 8h2v1h-2zM5 9h2v1h-2zM5 10h2v1h-2z"/></svg>
<svg style="left:764px;top:606px" width="13" height="13" shape-rendering="crispEdges"><path fill="#000" d="M4 0h1v1h-1zM6 0h1v1h-1zM7 1h1v1h-1zM4 2h1v1h-1zM7 3h1v1h-1zM0 4h1v1h-1zM2 4h1v1h-1zM4 4h1v1h-1zM8 4h1v1h-1zM10 4h1v1h-1zM11 5h1v1h-1zM0 6h1v1h-1zM1 7h1v1h-1zM3 7h1v1h-1zM7 7h1v1h-1zM9 7h1v1h-1zM11 7h1v1h-1zM4 8h1v1h-1zM7 9h1v1h-1zM4 10h1v1h-1zM5 11h1v1h-1zM7 11h1v1h-1z"/><path fill="#00ff00" d="M5 1h1v1h-1zM5 3h1v1h-1zM1 5h1v1h-1zM3 5h1v1h-1zM5 5h1v1h-1zM7 5h1v1h-1zM9 5h1v1h-1zM5 7h1v1h-1zM5 9h1v1h-1z"/><path fill="#008000" d="M6 2h1v1h-1zM6 4h1v1h-1zM2 6h1v1h-1zM4 6h1v1h-1zM6 6h1v1h-1zM8 6h1v1h-1zM10 6h1v1h-1zM6 8h1v1h-1zM6 10h1v1h-1z"/></svg>
<svg style="left:795px;top:606px" width="17" height="14" shape-rendering="crispEdges"><path fill="#fff" transform="translate(1,1)" d="M1 0h1v1h-1zM7 0h1v1h-1zM13 0h1v1h-1zM3 2h1v1h-1zM7 2h1v1h-1zM11 2h1v1h-1zM4 3h1v1h-1zM10 3h1v1h-1zM5 4h1v1h-1zM7 4h1v1h-1zM9 4h1v1h-1zM0 6h1v1h-1zM2 6h2v1h-2zM5 6h1v1h-1zM9 6h1v1h-1zM11 6h2v1h-2zM14 6h1v1h-1zM5 8h1v1h-1zM7 8h1v1h-1zM9 8h1v1h-1zM4 9h1v1h-1zM10 9h1v1h-1zM3 10h1v1h-1zM7 10h1v1h-1zM11 10h1v1h-1zM1 12h1v1h-1zM7 12h1v1h-1zM13 12h1v1h-1z"/><path fill="#808080" d="M1 0h1v1h-1zM7 0h1v1h-1zM13 0h1v1h-1zM3 2h1v1h-1zM7 2h1v1h-1zM11 2h1v1h-1zM4 3h1v1h-1zM10 3h1v1h-1zM5 4h1v1h-1zM7 4h1v1h-1zM9 4h1v1h-1zM0 6h1v1h-1zM2 6h2v1h-2zM5 6h1v1h-1zM9 6h1v1h-1zM11 6h2v1h-2zM14 6h1v1h-1zM5 8h1v1h-1zM7 8h1v1h-1zM9 8h1v1h-1zM4 9h1v1h-1zM10 9h1v1h-1zM3 10h1v1h-1zM7 10h1v1h-1zM11 10h1v1h-1zM1 12h1v1h-1zM7 12h1v1h-1zM13 12h1v1h-1z"/></svg>
<svg style="left:829px;top:606px" width="17" height="14" shape-rendering="crispEdges"><path fill="#fff" transform="translate(1,1)" d="M7 0h2v1h-2zM6 1h4v1h-4zM5 2h6v1h-6zM6 3h6v1h-6zM7 4h6v1h-6zM6 5h8v1h-8zM5 6h3v1h-3zM9 6h4v1h-4zM4 7h3v1h-3zM10 7h2v1h-2zM3 8h3v1h-3zM2 9h3v1h-3zM1 10h3v1h-3zM0 11h3v1h-3zM0 12h2v1h-2z"/><path fill="#808080" d="M7 0h2v1h-2zM6 1h4v1h-4zM5 2h6v1h-6zM6 3h6v1h-6zM7 4h6v1h-6zM6 5h8v1h-8zM5 6h3v1h-3zM9 6h4v1h-4zM4 7h3v1h-3zM10 7h2v1h-2zM3 8h3v1h-3zM2 9h3v1h-3zM1 10h3v1h-3zM0 11h3v1h-3zM0 12h2v1h-2z"/></svg>
<svg style="left:869px;top:605px" width="12" height="16" shape-rendering="crispEdges"><path fill="#ffff00" d="M2 0h7v1h-7zM1 1h8v1h-8zM0 2h4v1h-4zM7 2h3v1h-3zM0 3h3v1h-3zM8 3h2v1h-2zM8 4h2v1h-2zM6 5h3v1h-3zM5 6h3v1h-3zM4 7h3v1h-3zM4 8h2v1h-2zM4 9h2v1h-2zM3 11h4v1h-4zM3 12h4v1h-4zM3 13h4v1h-4z"/><path fill="#808000" d="M9 1h1v1h-1zM4 2h1v1h-1zM10 2h1v1h-1zM3 3h1v1h-1zM10 3h1v1h-1zM1 4h2v1h-2zM10 4h1v1h-1zM9 5h1v1h-1zM8 6h1v1h-1zM7 7h1v1h-1zM6 8h1v1h-1zM6 9h1v1h-1zM7 12h1v1h-1zM7 13h1v1h-1zM4 14h4v1h-4z"/></svg>
<svg style="left:899px;top:606px" width="20" height="16" shape-rendering="crispEdges"><path fill="#000080" d="M2 0h14v1h-14zM2 1h1v1h-1zM15 1h1v1h-1zM1 2h2v1h-2zM15 2h1v1h-1zM1 3h1v1h-1zM0 4h2v1h-2zM0 5h1v1h-1zM3 5h5v1h-5zM0 6h1v1h-1zM3 6h1v1h-1zM7 6h1v1h-1zM0 7h1v1h-1zM3 7h1v1h-1zM7 7h1v1h-1zM0 8h1v1h-1zM3 8h1v1h-1zM7 8h1v1h-1zM0 9h1v1h-1zM3 9h5v1h-5zM0 10h1v1h-1zM0 11h2v1h-2zM1 12h1v1h-1zM1 13h1v1h-1z"/><path fill="#fff" d="M3 1h12v1h-12zM3 2h1v1h-1zM13 2h2v1h-2zM2 3h13v1h-13zM16 3h1v1h-1zM2 4h13v1h-13zM16 4h2v1h-2zM1 5h2v1h-2zM8 5h7v1h-7zM17 5h1v1h-1zM1 6h2v1h-2zM8 6h1v1h-1zM14 6h1v1h-1zM17 6h1v1h-1zM1 7h2v1h-2zM8 7h7v1h-7zM16 7h1v1h-1zM1 8h2v1h-2zM8 8h1v1h-1zM14 8h1v1h-1zM1 9h2v1h-2zM8 9h7v1h-7zM1 10h8v1h-8zM14 10h1v1h-1zM2 11h13v1h-13zM2 12h13v1h-13z"/><path fill="#000" d="M16 1h1v1h-1zM16 2h1v1h-1zM15 3h1v1h-1zM17 3h1v1h-1zM15 4h1v1h-1zM18 4h1v1h-1zM15 5h1v1h-1zM18 5h1v1h-1zM15 6h1v1h-1zM18 6h1v1h-1zM15 7h1v1h-1zM17 7h1v1h-1zM15 8h2v1h-2zM15 9h2v1h-2zM15 10h2v1h-2zM15 11h2v1h-2zM15 12h2v1h-2zM2 13h14v1h-14zM2 14h13v1h-13z"/><path fill="#008080" d="M4 2h1v1h-1zM6 2h1v1h-1zM8 2h1v1h-1zM10 2h1v1h-1zM12 2h1v1h-1zM4 6h2v1h-2zM4 7h1v1h-1zM6 7h1v1h-1zM5 8h2v1h-2z"/><path fill="#80e0ff" d="M5 2h1v1h-1zM7 2h1v1h-1zM9 2h1v1h-1zM11 2h1v1h-1zM16 5h1v1h-1zM6 6h1v1h-1zM16 6h1v1h-1zM5 7h1v1h-1zM4 8h1v1h-1z"/><path fill="#0000ff" d="M9 6h5v1h-5zM9 8h5v1h-5zM9 10h5v1h-5z"/></svg>
<svg style="left:929px;top:618px" width="6" height="4" shape-rendering="crispEdges"><path d="M0 0h5v1h-1v1h-1v1h-1v-1h-1v-1h-1z" fill="#000"/></svg>
<svg style="left:954px;top:606px" width="14" height="13" shape-rendering="crispEdges"><path fill="#fff" transform="translate(1,1)" d="M0 0h2v1h-2zM11 0h2v1h-2zM1 1h2v1h-2zM10 1h2v1h-2zM2 2h2v1h-2zM9 2h2v1h-2zM3 3h2v1h-2zM8 3h2v1h-2zM4 4h2v1h-2zM7 4h2v1h-2zM5 5h3v1h-3zM5 6h3v1h-3zM4 7h2v1h-2zM7 7h2v1h-2zM3 8h2v1h-2zM8 8h2v1h-2zM2 9h2v1h-2zM9 9h2v1h-2zM1 10h2v1h-2zM10 10h2v1h-2zM0 11h2v1h-2zM11 11h2v1h-2z"/><path fill="#808080" d="M0 0h2v1h-2zM11 0h2v1h-2zM1 1h2v1h-2zM10 1h2v1h-2zM2 2h2v1h-2zM9 2h2v1h-2zM3 3h2v1h-2zM8 3h2v1h-2zM4 4h2v1h-2zM7 4h2v1h-2zM5 5h3v1h-3zM5 6h3v1h-3zM4 7h2v1h-2zM7 7h2v1h-2zM3 8h2v1h-2zM8 8h2v1h-2zM2 9h2v1h-2zM9 9h2v1h-2zM1 10h2v1h-2zM10 10h2v1h-2zM0 11h2v1h-2zM11 11h2v1h-2z"/></svg>
<div class="vsep" style="left:855px;top:603px;height:31px"></div>
<div class="vsep" style="left:940px;top:603px;height:31px"></div>
<span class="t" style="left:728.80px;top:619px;font-size:10px;color:#000;transform:scaleX(0.9507);">Add</span>
<span class="t" style="left:757.75px;top:619px;font-size:10px;color:#000;transform:scaleX(0.9853);">Temp</span>
<span class="t" style="left:792.26px;top:620px;font-size:10px;color:#fff;transform:scaleX(0.9892);">Make</span>
<span class="t" style="left:791.26px;top:619px;font-size:10px;color:#808080;transform:scaleX(0.9892);">Make</span>
<span class="t" style="left:826.18px;top:620px;font-size:10px;color:#fff;transform:scaleX(1.0924);">Mod</span>
<span class="t" style="left:825.18px;top:619px;font-size:10px;color:#808080;transform:scaleX(1.0924);">Mod</span>
<span class="t" style="left:865.93px;top:619px;font-size:10px;color:#000;transform:scaleX(0.9886);">Info</span>
<span class="t" style="left:898.68px;top:619px;font-size:10px;color:#000;transform:scaleX(0.8938);">Xtra</span>
<span class="t" style="left:953.44px;top:620px;font-size:10px;color:#fff;transform:scaleX(1.0128);">Del</span>
<span class="t" style="left:952.44px;top:619px;font-size:10px;color:#808080;transform:scaleX(1.0128);">Del</span>
<div class="a frame" style="left:291px;top:129px;width:442px;height:481px;"></div>
<div class="a " style="left:294px;top:132px;width:436px;height:15px;background:linear-gradient(90deg,#0a246a,#a6caf0)"></div>
<span class="t" style="left:295.20px;top:132px;font-size:11px;color:#fff;font-weight:bold;transform:scaleX(1.0655);">Edit object</span>
<div class="a btn" style="left:718px;top:134px;width:10px;height:11px;"></div>
<svg style="left:720px;top:136px" width="6" height="6" shape-rendering="crispEdges"><path d="M0 0h1v1h1v1h1v1h1v1h1v1h-1v-1h-1v-1h-1v-1h-1v-1h-1zM4 0h1v1h-1zM3 1h1v1h-1zM1 3h1v1h-1zM0 4h1v1h-1z" fill="#000"/></svg>
<div class="a " style="left:300px;top:174px;width:424px;height:399px;box-shadow:inset 1px 1px 0 #fff,inset -1px -1px 0 #404040,inset -2px -2px 0 #808080"></div>
<div class="a " style="left:302px;top:156px;width:48px;height:18px;border-radius:2px 2px 0 0;background:#d4d0c8;box-shadow:inset 1px 1px 0 #fff,inset -1px 0 0 #404040,inset -2px 0 0 #808080;"></div>
<div class="a " style="left:403px;top:156px;width:79px;height:18px;border-radius:2px 2px 0 0;background:#d4d0c8;box-shadow:inset 1px 1px 0 #fff,inset -1px 0 0 #404040,inset -2px 0 0 #808080;"></div>
<div class="a " style="left:350px;top:154px;width:53px;height:22px;border-radius:2px 2px 0 0;background:#d4d0c8;box-shadow:inset 1px 1px 0 #fff,inset -1px 0 0 #404040,inset -2px 0 0 #808080;"></div>
<div class="a " style="left:351px;top:174px;width:50px;height:2px;background:#d4d0c8"></div>
<span class="t" style="left:308.45px;top:158px;font-size:12px;color:#000;transform:scaleX(0.8727);">General</span>
<span class="t" style="left:357.06px;top:156px;font-size:12px;color:#000;transform:scaleX(0.8871);">Settings</span>
<span class="t" style="left:406.59px;top:158px;font-size:12px;color:#000;transform:scaleX(0.9088);">Dependencies</span>
<div class="a chk" style="left:694px;top:181px;width:16px;height:383px;"></div>
<div class="a raised" style="left:694px;top:181px;width:16px;height:16px;"></div>
<div class="a raised" style="left:694px;top:197px;width:16px;height:16px;"></div>
<div class="a raised" style="left:694px;top:548px;width:16px;height:16px;"></div>
<svg style="left:698px;top:187px" width="8" height="5" shape-rendering="crispEdges"><path d="M3 0h1v1h1v1h1v1h1v1h-7v-1h1v-1h1v-1h1z" fill="#000"/></svg>
<svg style="left:698px;top:554px" width="8" height="5" shape-rendering="crispEdges"><path d="M0 0h7v1h-1v1h-1v1h-1v1h-1v-1h-1v-1h-1v-1h-1z" fill="#000"/></svg>
<span class="t" style="left:314.06px;top:193px;font-size:12px;color:#000;transform:scaleX(0.8780);">Style</span>
<span class="t" style="left:313.58px;top:220px;font-size:12px;color:#000;transform:scaleX(0.9231);">Model</span>
<span class="t" style="left:313.56px;top:267px;font-size:12px;color:#000;transform:scaleX(0.8357);">IdleAnim</span>
<span class="t" style="left:313.64px;top:314px;font-size:12px;color:#000;transform:scaleX(0.8584);">FireAnim</span>
<span class="t" style="left:313.57px;top:361px;font-size:12px;color:#000;transform:scaleX(0.9336);">BackModel</span>
<span class="t" style="left:314.05px;top:412px;font-size:12px;color:#000;transform:scaleX(0.9008);">SwitchTime</span>
<span class="t" style="left:313.60px;top:443px;font-size:12px;color:#000;transform:scaleX(0.9004);">ReloadTime</span>
<span class="t" style="left:313.62px;top:474px;font-size:12px;color:#000;transform:scaleX(0.8803);">KeyNumber</span>
<div class="a sunken" style="left:344px;top:190px;width:340px;height:21px;background:#fff"></div>
<span class="t" style="left:348.09px;top:193px;font-size:12px;color:#000;transform:scaleX(0.8182);">---</span>
<div class="a raised" style="left:666px;top:192px;width:16px;height:17px;"></div>
<svg style="left:670px;top:198px" width="8" height="5" shape-rendering="crispEdges"><path d="M0 0h7v1h-1v1h-1v1h-1v1h-1v-1h-1v-1h-1v-1h-1z" fill="#000"/></svg>
<div class="a sunken" style="left:314px;top:237px;width:370px;height:21px;background:#fff"></div>
<div class="a raised" style="left:660px;top:239px;width:22px;height:17px;"></div>
<svg width="0" height="0" style="left:0;top:0"><defs><g id="fb" shape-rendering="crispEdges"><path fill="#808080" d="M2 0h5v1h-5zM1 1h1v1h-1zM7 1h1v1h-1zM0 2h1v1h-1zM8 2h4v1h-4zM0 3h1v1h-1zM11 3h1v1h-1zM0 4h1v1h-1zM11 4h1v1h-1zM0 5h1v1h-1zM11 5h1v1h-1zM0 6h1v1h-1zM11 6h1v1h-1zM0 7h1v1h-1zM11 7h1v1h-1zM0 8h1v1h-1zM11 8h1v1h-1zM0 9h12v1h-12z"/><path fill="#ffff00" d="M2 1h1v1h-1zM4 1h1v1h-1zM6 1h1v1h-1zM1 2h1v1h-1zM3 2h1v1h-1zM5 2h1v1h-1zM7 2h1v1h-1zM2 4h1v1h-1zM4 4h1v1h-1zM6 4h1v1h-1zM8 4h1v1h-1zM10 4h1v1h-1zM3 5h1v1h-1zM5 5h1v1h-1zM7 5h1v1h-1zM9 5h1v1h-1zM2 6h1v1h-1zM4 6h1v1h-1zM6 6h1v1h-1zM8 6h1v1h-1zM10 6h1v1h-1zM3 7h1v1h-1zM5 7h1v1h-1zM7 7h1v1h-1zM9 7h1v1h-1zM2 8h1v1h-1zM4 8h1v1h-1zM6 8h1v1h-1zM8 8h1v1h-1zM10 8h1v1h-1z"/><path fill="#c0c0c0" d="M3 1h1v1h-1zM5 1h1v1h-1zM2 2h1v1h-1zM4 2h1v1h-1zM6 2h1v1h-1zM3 4h1v1h-1zM5 4h1v1h-1zM7 4h1v1h-1zM9 4h1v1h-1zM2 5h1v1h-1zM4 5h1v1h-1zM6 5h1v1h-1zM8 5h1v1h-1zM10 5h1v1h-1zM3 6h1v1h-1zM5 6h1v1h-1zM7 6h1v1h-1zM9 6h1v1h-1zM2 7h1v1h-1zM4 7h1v1h-1zM6 7h1v1h-1zM8 7h1v1h-1zM10 7h1v1h-1zM3 8h1v1h-1zM5 8h1v1h-1zM7 8h1v1h-1zM9 8h1v1h-1z"/><path fill="#fff" d="M1 3h10v1h-10zM1 4h1v1h-1zM1 5h1v1h-1zM1 6h1v1h-1zM1 7h1v1h-1zM1 8h1v1h-1z"/><path fill="#000" d="M12 3h1v1h-1zM12 4h1v1h-1zM12 5h1v1h-1zM12 6h1v1h-1zM12 7h1v1h-1zM12 8h1v1h-1zM12 9h1v1h-1zM1 10h12v1h-12z"/></g></defs></svg><svg style="left:665px;top:241px" width="14" height="12"><use href="#fb"/></svg>
<div class="a sunken" style="left:314px;top:284px;width:370px;height:21px;background:#fff"></div>
<div class="a raised" style="left:660px;top:286px;width:22px;height:17px;"></div>
<svg style="left:665px;top:288px" width="14" height="12"><use href="#fb"/></svg>
<div class="a sunken" style="left:314px;top:331px;width:370px;height:21px;background:#fff"></div>
<div class="a raised" style="left:660px;top:333px;width:22px;height:17px;"></div>
<svg style="left:665px;top:335px" width="14" height="12"><use href="#fb"/></svg>
<div class="a sunken" style="left:314px;top:378px;width:370px;height:21px;background:#fff"></div>
<div class="a raised" style="left:660px;top:380px;width:22px;height:17px;"></div>
<svg style="left:665px;top:382px" width="14" height="12"><use href="#fb"/></svg>
<div class="a sunken" style="left:376px;top:409px;width:301px;height:21px;background:#fff"></div>
<span class="t" style="left:378.55px;top:410px;font-size:12px;color:#000;transform:scaleX(0.9099);">0.000</span>
<div class="a frame" style="left:660px;top:411px;width:15px;height:8px;"></div>
<div class="a frame" style="left:660px;top:420px;width:15px;height:8px;"></div>
<div class="a " style="left:667px;top:414px;width:1px;height:1px;background:#000"></div>
<div class="a " style="left:666px;top:415px;width:3px;height:1px;background:#000"></div>
<div class="a " style="left:666px;top:423px;width:3px;height:1px;background:#000"></div>
<div class="a " style="left:667px;top:424px;width:1px;height:1px;background:#000"></div>
<div class="a sunken" style="left:378px;top:440px;width:299px;height:21px;background:#fff"></div>
<span class="t" style="left:380.55px;top:441px;font-size:12px;color:#000;transform:scaleX(0.9099);">0.000</span>
<div class="a frame" style="left:660px;top:442px;width:15px;height:8px;"></div>
<div class="a frame" style="left:660px;top:451px;width:15px;height:8px;"></div>
<div class="a " style="left:667px;top:445px;width:1px;height:1px;background:#000"></div>
<div class="a " style="left:666px;top:446px;width:3px;height:1px;background:#000"></div>
<div class="a " style="left:666px;top:454px;width:3px;height:1px;background:#000"></div>
<div class="a " style="left:667px;top:455px;width:1px;height:1px;background:#000"></div>
<div class="a sunken" style="left:376px;top:471px;width:301px;height:21px;background:#fff"></div>
<span class="t" style="left:378.55px;top:472px;font-size:12px;color:#000;transform:scaleX(0.9099);">0.000</span>
<div class="a frame" style="left:660px;top:473px;width:15px;height:8px;"></div>
<div class="a frame" style="left:660px;top:482px;width:15px;height:8px;"></div>
<div class="a " style="left:667px;top:476px;width:1px;height:1px;background:#000"></div>
<div class="a " style="left:666px;top:477px;width:3px;height:1px;background:#000"></div>
<div class="a " style="left:666px;top:485px;width:3px;height:1px;background:#000"></div>
<div class="a " style="left:667px;top:486px;width:1px;height:1px;background:#000"></div>
<div class="a sunken" style="left:314px;top:506px;width:13px;height:13px;background:#fff"></div>
<div class="a sunken" style="left:314px;top:537px;width:13px;height:13px;background:#fff"></div>
<svg style="left:317px;top:540px" width="8" height="8" shape-rendering="crispEdges"><path d="M0 2h1v1h1v1h1v-1h1v-1h1v-1h1v-1h1v3h-1v1h-1v1h-1v1h-1v1h-1v-1h-1v-1h-1z" fill="#000"/></svg>
<span class="t" style="left:331.94px;top:504px;font-size:12px;color:#000;transform:scaleX(0.8893);">CanSnipe</span>
<span class="t" style="left:331.95px;top:535px;font-size:12px;color:#000;transform:scaleX(0.8776);">CanReceiveGenericCnCAmmo</span>
<div class="a " style="left:344px;top:211px;width:340px;height:93px;background:#fff;border:1px solid #000"></div>
<div class="a " style="left:345px;top:225px;width:338px;height:13px;background:#0a246a"></div>
<span class="t" style="left:347.48px;top:211px;font-size:12px;color:#000;transform:scaleX(0.8348);">C4</span>
<span class="t" style="left:347.59px;top:224px;font-size:12px;color:#fff;transform:scaleX(0.8182);">---</span>
<span class="t" style="left:347.56px;top:237px;font-size:12px;color:#000;transform:scaleX(0.8760);">Shoulder</span>
<span class="t" style="left:347.07px;top:250px;font-size:12px;color:#000;transform:scaleX(0.9323);">Hip</span>
<span class="t" style="left:347.10px;top:263px;font-size:12px;color:#000;transform:scaleX(0.9003);">Launcher</span>
<span class="t" style="left:347.08px;top:276px;font-size:12px;color:#000;transform:scaleX(0.9173);">Handgun</span>
<span class="t" style="left:347.07px;top:289px;font-size:12px;color:#000;transform:scaleX(0.9260);">Beacon</span>
<div class="a raised" style="left:444px;top:579px;width:75px;height:23px;"></div>
<div class="a raised" style="left:525px;top:579px;width:75px;height:23px;"></div>
<div class="a raised" style="left:612px;top:579px;width:112px;height:23px;"></div>
<span class="t" style="left:474.06px;top:582px;font-size:12px;color:#000;transform:scaleX(0.8776);">OK</span>
<span class="t" style="left:546.03px;top:582px;font-size:12px;color:#000;transform:scaleX(0.9111);">Cancel</span>
<span class="t" style="left:625.57px;top:582px;font-size:12px;color:#000;transform:scaleX(0.8700);">OK &amp; Propagate...</span>
<div class="a sunken" style="left:4px;top:653px;width:1020px;height:63px;"></div>
<span class="t" style="left:8.00px;top:655px;font-size:12px;color:#000;transform:scaleX(0.9006);">Attempting to load: C:\Program Files\RenegadePublicTools\LevelEdit\scripts342 RP2\FullMoon.tga</span>
<span class="t" style="left:8.00px;top:668px;font-size:12px;color:#000;transform:scaleX(0.8990);">Attempting to load: C:\Program Files\RenegadePublicTools\LevelEdit\FullMoon.tga</span>
<span class="t" style="left:8.28px;top:681px;font-size:12px;color:#000;transform:scaleX(0.8813);">Texture file not found: fullmoon.tga</span>
<div class="a chk" style="left:1006px;top:655px;width:16px;height:59px;"></div>
<div class="a raised" style="left:1006px;top:655px;width:16px;height:16px;"></div>
<div class="a raised" style="left:1006px;top:690px;width:16px;height:8px;"></div>
<div class="a raised" style="left:1006px;top:698px;width:16px;height:16px;"></div>
<svg style="left:1010px;top:661px" width="8" height="5" shape-rendering="crispEdges"><path d="M3 0h1v1h1v1h1v1h1v1h-7v-1h1v-1h1v-1h1z" fill="#000"/></svg>
<svg style="left:1010px;top:704px" width="8" height="5" shape-rendering="crispEdges"><path d="M0 0h7v1h-1v1h-1v1h-1v1h-1v-1h-1v-1h-1v-1h-1z" fill="#000"/></svg>
<div class="a " style="left:0px;top:720px;width:1024px;height:1px;background:#808080"></div>
<div class="a " style="left:0px;top:721px;width:1024px;height:1px;background:#fff"></div>
<span class="t" style="left:1.14px;top:724px;font-size:11px;color:#000;transform:scaleX(0.9879);">Ready</span>
<div class="a tsunk" style="left:555px;top:724px;width:180px;height:16px;"></div>
<div class="a tsunk" style="left:737px;top:724px;width:86px;height:16px;"></div>
<div class="a tsunk" style="left:825px;top:724px;width:109px;height:16px;"></div>
<div class="a tsunk" style="left:936px;top:724px;width:88px;height:16px;"></div>
<span class="t" style="left:556.49px;top:724px;font-size:11px;color:#000;transform:scaleX(1.0220);">Camera (0.00,0.00,80.00)</span>
<span class="t" style="left:738.62px;top:724px;font-size:11px;color:#000;">Frame 1 / 0</span>
<span class="t" style="left:936.64px;top:724px;font-size:11px;color:#000;transform:scaleX(0.9787);">Polys 108</span>
<svg style="left:1011px;top:727px" width="13" height="13"><path d="M12 1L1 12M12 5L5 12M12 9L9 12" stroke="#808080" stroke-width="1.4" fill="none"/><path d="M12 0L0 12M12 4L4 12M12 8L8 12" stroke="#fff" stroke-width="1" fill="none"/></svg>
<div class="a " style="left:0px;top:741px;width:1024px;height:1px;background:#fff"></div>
<div class="a raised" style="left:2px;top:744px;width:52px;height:22px;"></div>
<span class="t" style="left:21.21px;top:747px;font-size:11px;color:#000;font-weight:bold;transform:scaleX(1.1574);">Start</span>
<div class="a raised" style="left:59px;top:744px;width:160px;height:22px;"></div>
<div class="a raised" style="left:222px;top:744px;width:160px;height:22px;"></div>
<div class="a raised" style="left:385px;top:744px;width:160px;height:22px;"></div>
<div class="a chk pressed" style="left:548px;top:744px;width:160px;height:22px;"></div>
<span class="t" style="left:83.00px;top:747px;font-size:11px;color:#000;transform:scaleX(0.9751);">Automatic Updates</span>
<span class="t" style="left:245.20px;top:747px;font-size:11px;color:#000;transform:scaleX(0.9928);">Command and Conquer: ...</span>
<span class="t" style="left:407.45px;top:747px;font-size:11px;color:#000;transform:scaleX(0.9713);">LevelEdit</span>
<span class="t" style="left:572.33px;top:747px;font-size:11px;color:#000;font-weight:bold;transform:scaleX(1.0702);">Untitled - Commando ...</span>
<div class="a tsunk" style="left:834px;top:744px;width:188px;height:22px;"></div>
<span class="t" style="left:967.74px;top:747px;font-size:11px;color:#000;transform:scaleX(1.0182);">11:21 AM</span>
<div class="a " style="left:2px;top:1px;width:16px;height:16px;background:linear-gradient(45deg,#2a9a80,#3fd8b4 60%,#45e2c0)"></div>
<svg width="0" height="0" style="left:0;top:0"><defs><g id="app" shape-rendering="crispEdges"><path fill="#208870" d="M3 1h6v1h-6zM2 2h1v1h-1zM9 2h1v1h-1zM12 2h2v1h-2zM1 3h1v1h-1zM10 3h2v1h-2zM14 3h1v1h-1zM0 4h1v1h-1zM8 4h3v1h-3zM12 4h1v1h-1zM15 4h1v1h-1zM0 5h1v1h-1zM7 5h3v1h-3zM14 5h1v1h-1zM0 6h1v1h-1zM3 6h1v1h-1zM8 6h1v1h-1zM13 6h1v1h-1zM1 7h4v1h-4zM12 7h1v1h-1zM4 8h1v1h-1zM11 8h1v1h-1zM3 9h1v1h-1zM12 9h1v1h-1zM2 10h1v1h-1zM7 10h1v1h-1zM13 10h1v1h-1zM1 11h1v1h-1zM6 11h1v1h-1zM8 11h1v1h-1zM14 11h1v1h-1zM1 12h1v1h-1zM3 12h1v1h-1zM6 12h1v1h-1zM9 12h1v1h-1zM14 12h1v1h-1zM1 13h1v1h-1zM5 13h1v1h-1zM10 13h1v1h-1zM14 13h1v1h-1zM2 14h3v1h-3zM11 14h3v1h-3z"/><path fill="#fff" d="M3 2h6v1h-6zM2 3h8v1h-8zM12 3h2v1h-2zM1 4h7v1h-7zM11 4h1v1h-1zM13 4h2v1h-2zM1 5h6v1h-6zM10 5h4v1h-4zM1 6h2v1h-2zM4 6h4v1h-4zM9 6h4v1h-4zM5 7h7v1h-7zM5 8h6v1h-6zM4 9h8v1h-8zM3 10h4v1h-4zM8 10h5v1h-5zM2 11h4v1h-4zM9 11h5v1h-5zM2 12h1v1h-1zM4 12h2v1h-2zM10 12h4v1h-4zM2 13h3v1h-3zM11 13h3v1h-3z"/></g></defs></svg><svg style="left:2px;top:1px" width="17" height="17"><use href="#app"/></svg>
<div class="a " style="left:553px;top:748px;width:16px;height:16px;background:linear-gradient(45deg,#2a9a80,#3fd8b4 60%,#45e2c0)"></div>
<svg style="left:553px;top:748px" width="17" height="17"><use href="#app"/></svg>
<svg style="left:5px;top:747px" width="16" height="14" viewBox="0 0 16 14"><path d="M2.2 0.8C4 -0.2 5.8 0 7.4 1L6.4 6C4.8 5 3 4.9 1.2 5.8z" fill="#e8501c"/><path d="M8.4 1.4C10.2 2.4 12.4 2.2 14.8 1L13.8 6C11.6 7.2 9.4 7.4 7.4 6.4z" fill="#5cbf22"/><path d="M1 6.8C2.8 5.9 4.6 6 6.2 7L5.2 12C3.6 11 1.8 10.9 0 11.8z" fill="#3b78e0"/><path d="M7.2 7.4C9.2 8.4 11.4 8.2 13.6 7L12.6 12C10.4 13.2 8.2 13.4 6.2 12.4z" fill="#f2c414"/></svg>
<svg style="left:63px;top:747px" width="16" height="16" viewBox="0 0 16 16"><defs><radialGradient id="gl63" cx="0.4" cy="0.35" r="0.7"><stop offset="0" stop-color="#4aa0ff"/><stop offset="1" stop-color="#0a3cb0"/></radialGradient></defs><circle cx="9.2" cy="9.6" r="5.8" fill="url(#gl63)"/><path d="M7 6.5c1.5-.8 3 .2 2.6 1.8-.4 1.4-2 1.2-2.2 2.8-1.2-.6-1.6-3.2-.4-4.600zM11 9c1.200-.600 2.600.200 2.400 1.800-.600 1.600-2 2.200-2.600.800-.400-.900-.300-2.100.200-2.600z" fill="#3fae2a"/><path d="M0.800 1.600c1.200-.800 2.400-.600 3.400.100l-.600 3c-1-.700-2.200-.800-3.400-.100z" fill="#e8501c"/><path d="M4.800 2c1.200.700 2.400.600 3.600-.200l-.600 3c-1.200.800-2.400.900-3.600.200z" fill="#5cbf22"/><path d="M0 5.400c1.200-.700 2.400-.600 3.400.100l-.500 2.800c-1-.700-2.200-.800-3.400-.100z" fill="#5a7ee8"/><path d="M4 5.800c1.200.700 2.400.600 3.600-.200l-.500 2.800c-1.200.800-2.400.900-3.600.200z" fill="#f2c414"/></svg>
<svg style="left:855px;top:747px" width="16" height="16" viewBox="0 0 16 16"><defs><radialGradient id="gl855" cx="0.4" cy="0.35" r="0.7"><stop offset="0" stop-color="#4aa0ff"/><stop offset="1" stop-color="#0a3cb0"/></radialGradient></defs><circle cx="9.2" cy="9.6" r="5.8" fill="url(#gl855)"/><path d="M7 6.5c1.5-.8 3 .2 2.6 1.8-.4 1.4-2 1.2-2.2 2.8-1.2-.6-1.6-3.2-.4-4.600zM11 9c1.200-.600 2.600.200 2.400 1.800-.600 1.600-2 2.200-2.600.800-.400-.900-.300-2.100.200-2.600z" fill="#3fae2a"/><path d="M0.800 1.600c1.200-.800 2.400-.600 3.400.100l-.600 3c-1-.700-2.200-.800-3.400-.100z" fill="#e8501c"/><path d="M4.800 2c1.200.700 2.400.600 3.600-.200l-.600 3c-1.200.800-2.400.900-3.600.200z" fill="#5cbf22"/><path d="M0 5.400c1.200-.700 2.400-.600 3.400.100l-.500 2.800c-1-.700-2.200-.800-3.400-.100z" fill="#5a7ee8"/><path d="M4 5.800c1.200.700 2.400.600 3.600-.200l-.500 2.800c-1.200.800-2.400.900-3.600.200z" fill="#f2c414"/></svg>
<svg style="left:226px;top:747px" width="17" height="16" viewBox="0 0 17 16"><path d="M3.500 .5h9l3 3v12h-12z" fill="#f4f4ec" stroke="#808080" stroke-width="1"/><path d="M12.500 .5v3h3" fill="#fff" stroke="#808080" stroke-width="1"/><path d="M9.800 9.200a3.600 3.600 0 1 0-.6 2.300" fill="none" stroke="#1c50d8" stroke-width="2.200"/><path d="M3.200 8h6.400" stroke="#1c50d8" stroke-width="1.800"/><path d="M1 9.500c-1.500 2.500 1 3.500 3.500 2" fill="none" stroke="#f0a020" stroke-width="1.200"/></svg>
<svg style="left:389px;top:748px" width="16" height="13" viewBox="0 0 16 13"><defs><linearGradient id="xf" x1="0" y1="0" x2="0" y2="1"><stop offset="0" stop-color="#fff6b0"/><stop offset="1" stop-color="#e2b030"/></linearGradient></defs><path d="M.500 2.500c0-1 .5-2 1.500-2h3.500l1.500 2h6c1 0 1.500.5 1.500 1.500v6.500c0 1-.5 1.500-1.500 1.500h-11c-1 0-1.500-.500-1.500-1.500z" fill="#e8c040" stroke="#b08818" stroke-width="1"/><path d="M2 4.500h12.500c.8 0 1 .5 1 1.200l-.5 5.300c0 .8-.5 1.200-1.200 1.200h-11.500c-.8 0-1.200-.500-1.200-1.200v-5c0-.9.300-1.500.900-1.500z" fill="url(#xf)" stroke="#c09820" stroke-width=".8"/></svg>
<svg style="left:837px;top:747px" width="17" height="17" viewBox="0 0 17 17"><circle cx="3.600" cy="3.600" r="2" fill="#5aa0e8"/><path d="M.500 11c0-3.500 1.500-5 3.200-5s3 1.500 3 5z" fill="#8ac0f0"/><circle cx="9.400" cy="3.200" r="2.700" fill="#2c8a70"/><circle cx="8.800" cy="2.600" r="1.300" fill="#4a7ad8"/><path d="M4 15c0-5 2.200-7 5.200-7s5 2 5 7z" fill="#46a878"/><circle cx="12.200" cy="12.400" r="3.900" fill="#e02818"/><path d="M10.400 10.600l3.600 3.600M14 10.600l-3.600 3.600" stroke="#fff" stroke-width="1.500"/></svg>
<svg style="left:873px;top:747px" width="15" height="16" viewBox="0 0 15 16" shape-rendering="crispEdges"><rect x="5" y="0" width="9" height="8" fill="#a8a8e0"/><rect x="6" y="1" width="7" height="5" fill="#404080"/><rect x="8" y="8" width="4" height="2" fill="#c8c8f0"/><rect x="6" y="10" width="8" height="2" fill="#b0b0e0"/><rect x="0" y="4" width="9" height="8" fill="#b8b8e8"/><rect x="1" y="5" width="7" height="5" fill="#38386c"/><rect x="3" y="12" width="4" height="2" fill="#d0d0f4"/><rect x="1" y="14" width="8" height="2" fill="#b8b8e8"/></svg>
<svg style="left:891px;top:747px" width="16" height="16" viewBox="0 0 16 16"><rect x="0" y="0" width="16" height="16" fill="#000"/><rect x="1" y="1" width="14" height="14" fill="#00f000"/><path d="M3.500 11.500a1.500 1.500 0 0 1 1.500 1.500M3.500 8.300a4.600 4.600 0 0 1 4.700 4.700M3.500 5.200a7.800 7.800 0 0 1 7.800 7.800M3.500 2.600" fill="none" stroke="#000" stroke-width="1.700"/></svg>
<svg style="left:909px;top:746px" width="17" height="17" viewBox="0 0 17 17"><rect x="4" y="1" width="10" height="8" fill="#e8e8f0" stroke="#8088a0" stroke-width="1"/><rect x="5.500" y="2.500" width="7" height="4.500" fill="#7088c8"/><rect x="6" y="4.500" width="6" height="2.500" fill="#e8b060"/><rect x="0" y="6" width="5" height="7" fill="#c0c4d0" stroke="#707488" stroke-width=".8"/><rect x="1" y="11.500" width="12" height="2" fill="#a0a4b8"/><path d="M8.500 8.500h7.500v3.500c0 2.500-1.800 4-3.700 4.800-2-.800-3.800-2.300-3.800-4.800z" fill="#fff" stroke="#000" stroke-width="1"/><path d="M9.800 11.200l2 2.200 4.200-5.400" fill="none" stroke="#20a020" stroke-width="1.800"/></svg>
<svg style="left:927px;top:749px" width="17" height="13" viewBox="0 0 17 13"><rect x="6.500" y="1.500" width="10" height="10.500" fill="#000"/><rect x="6" y="1" width="9.500" height="10" fill="#9cd020"/><path d="M.500 6c2-3.500 6-4.500 9-2.500M.500 6c2 3.500 6 4 9 1.500" fill="none" stroke="#000" stroke-width="1.200"/><path d="M3.500 6c1-2 3.500-2.500 5-1M3.500 6c1 1.800 3 2 4.500 1" fill="none" stroke="#fff" stroke-width="1"/><circle cx="6" cy="6" r="1.200" fill="#000"/></svg>
<svg style="left:945px;top:747px" width="16" height="17" viewBox="0 0 16 17"><ellipse cx="6.500" cy="6" rx="5" ry="5.600" fill="#707070" transform="rotate(-20 6.500 6)"/><ellipse cx="5.800" cy="5.800" rx="3.400" ry="4" fill="#9a9a9a" transform="rotate(-20 5.800 5.800)"/><ellipse cx="5.400" cy="5.600" rx="1.800" ry="2.200" fill="#505058" transform="rotate(-20 5.400 5.600)"/><path d="M1.200 3.500c-.8 1-.8 2.500 0 3.500" fill="none" stroke="#5050c0" stroke-width="1"/><path d="M7.500 13c3 0 5.500-2 6.500-5M8.500 15c3.500 0 6-2.500 7-5.500" fill="none" stroke="#8888f0" stroke-width="1"/></svg>
</div>
</body>
</html>
